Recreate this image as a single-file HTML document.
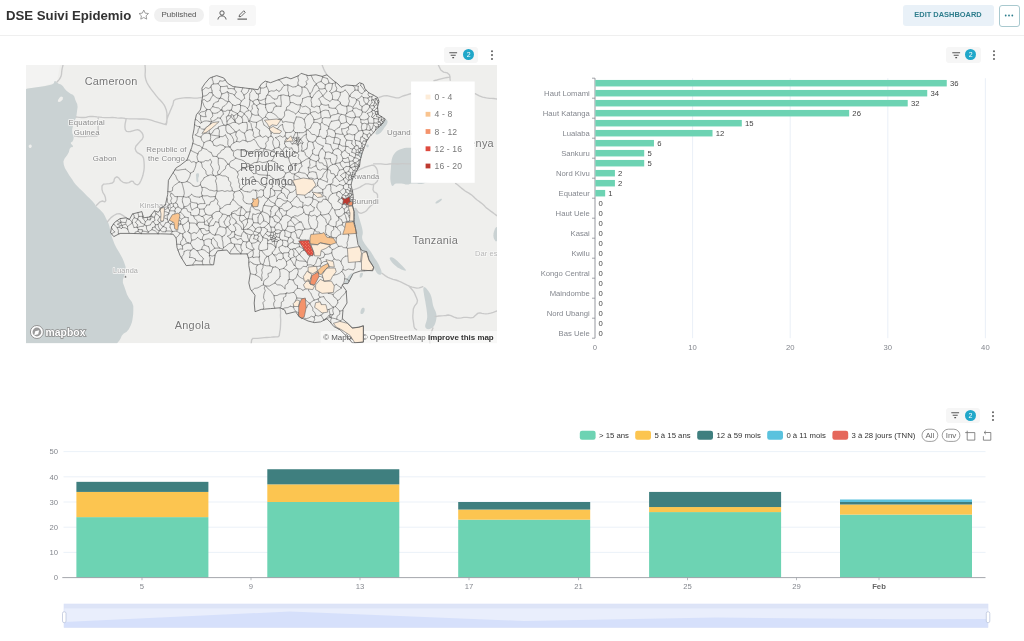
<!DOCTYPE html>
<html><head><meta charset="utf-8"><title>DSE Suivi Epidemio</title>
<style>
html,body{margin:0;padding:0;background:#fff;}
body{will-change:transform;opacity:0.999;width:1024px;height:641px;overflow:hidden;position:relative;font-family:"Liberation Sans",sans-serif;color:#333;}
.abs{position:absolute;}
#hdr{position:absolute;left:0;top:0;width:1024px;height:35px;border-bottom:1px solid #efefef;background:#fff;}
#title{position:absolute;left:6px;top:7.7px;font-size:13.2px;font-weight:bold;color:#323232;white-space:nowrap;line-height:16px;}
#pub{position:absolute;left:154px;top:7.5px;width:50px;height:14.5px;border-radius:8px;background:#f0f0f0;font-size:8px;line-height:14.5px;text-align:center;color:#555;}
#grp{position:absolute;left:209px;top:5px;width:46.5px;height:20.5px;border-radius:3px;background:#f7f7f7;}
#edit{position:absolute;left:902.5px;top:5px;width:91px;height:20.5px;border-radius:3px;background:#e9f1f8;color:#2d7d8c;font-size:7.45px;font-weight:bold;line-height:20.5px;text-align:center;letter-spacing:0;}
#more{position:absolute;left:998.5px;top:5px;width:19.5px;height:19.5px;border-radius:3px;border:1px solid #a9c9cf;background:#fff;}
.chip{position:absolute;width:34.4px;height:15.5px;border-radius:3px;background:#f6f6f6;}
.badge{position:absolute;width:11px;height:11px;border-radius:50%;background:#20a7c9;color:#fff;font-size:7px;line-height:11px;text-align:center;}
svg text{font-family:"Liberation Sans",sans-serif;}
</style></head><body>

<div id="hdr">
<div id="title">DSE Suivi Epidemio</div>
<svg class="abs" style="left:137.6px;top:8.7px" width="11.5" height="11" viewBox="0 0 24 23"><path d="M12 2.2l3 6.4 6.9.9-5 4.8 1.3 6.9L12 17.8l-6.2 3.4 1.3-6.9-5-4.8 6.900-.9z" fill="none" stroke="#8f8f8f" stroke-width="1.800" stroke-linejoin="round"/></svg>
<div id="pub">Published</div>
<div id="grp"></div>
<svg class="abs" style="left:217px;top:9.800px" width="10" height="10" viewBox="0 0 20 20"><circle cx="10" cy="6" r="4.3" fill="none" stroke="#444" stroke-width="1.7"/><path d="M1.8 19c.6-4.600 4-7.200 8.200-7.200s7.600 2.600 8.200 7.200" fill="none" stroke="#444" stroke-width="1.7"/></svg>
<svg class="abs" style="left:236.900px;top:9.700px" width="10.500" height="10" viewBox="0 0 21 20"><path d="M4 13.500l1-3.500 8.500-8.500 3 3L8 13z" fill="none" stroke="#444" stroke-width="1.600" stroke-linejoin="round"/><path d="M1 18.200H20" stroke="#444" stroke-width="2"/></svg>
<div id="edit">EDIT DASHBOARD</div>
<div id="more"><svg class="abs" style="left:4.5px;top:7.6px" width="10" height="3" viewBox="0 0 10 3"><circle cx="1.700" cy="1.500" r="0.900" fill="#2d7d8c"/><circle cx="5" cy="1.500" r="0.900" fill="#2d7d8c"/><circle cx="8.300" cy="1.500" r="0.900" fill="#2d7d8c"/></svg></div>
</div>

<div class="chip" style="left:444.1px;top:47.2px"></div><svg class="abs" style="left:449.3px;top:51.5px" width="9" height="8" viewBox="0 0 9 8"><path d="M0.3 0.8H8.1M1.7 3.2H6.7M3.3 5.6H5.1" stroke="#555" stroke-width="1.05" fill="none"/></svg><div class="badge" style="left:463.1px;top:49.400000000000006px">2</div><svg class="abs" style="left:489.6px;top:49.900000000000006px" width="4" height="11" viewBox="0 0 4 11"><circle cx="2" cy="1.2" r="1.05" fill="#666"/><circle cx="2" cy="5.1" r="1.05" fill="#666"/><circle cx="2" cy="9" r="1.05" fill="#666"/></svg>
<div class="chip" style="left:946.3px;top:47.2px"></div><svg class="abs" style="left:951.5px;top:51.5px" width="9" height="8" viewBox="0 0 9 8"><path d="M0.3 0.8H8.1M1.7 3.2H6.7M3.3 5.6H5.1" stroke="#555" stroke-width="1.05" fill="none"/></svg><div class="badge" style="left:965.3px;top:49.400000000000006px">2</div><svg class="abs" style="left:991.8px;top:49.900000000000006px" width="4" height="11" viewBox="0 0 4 11"><circle cx="2" cy="1.2" r="1.05" fill="#666"/><circle cx="2" cy="5.1" r="1.05" fill="#666"/><circle cx="2" cy="9" r="1.05" fill="#666"/></svg>
<div class="chip" style="left:945.9px;top:407.8px"></div><svg class="abs" style="left:951.1px;top:412.1px" width="9" height="8" viewBox="0 0 9 8"><path d="M0.3 0.8H8.1M1.7 3.2H6.7M3.3 5.6H5.1" stroke="#555" stroke-width="1.05" fill="none"/></svg><div class="badge" style="left:964.9px;top:410.0px">2</div><svg class="abs" style="left:991.4px;top:410.5px" width="4" height="11" viewBox="0 0 4 11"><circle cx="2" cy="1.2" r="1.05" fill="#666"/><circle cx="2" cy="5.1" r="1.05" fill="#666"/><circle cx="2" cy="9" r="1.05" fill="#666"/></svg>
<svg class="abs" style="left:0;top:0" width="1024" height="641" viewBox="0 0 1024 641">
<defs><clipPath id="mc"><rect x="26" y="65" width="471" height="278.3"/></clipPath><pattern id="dots" width="3" height="3" patternUnits="userSpaceOnUse"><circle cx="0.8" cy="0.8" r="0.45" fill="#f6c9a0"/><circle cx="2.3" cy="2.3" r="0.45" fill="#f6c9a0"/></pattern></defs>
<g clip-path="url(#mc)">
<rect x="26" y="65" width="471" height="278.3" fill="#efefed"/>
<path d="M26 65H60L57 82 40 87 26 89Z" fill="#f3f3f2"/>
<path d="M26.0 88.9 27.8 88.6 31.3 88.0 34.9 87.5 38.5 87.1 42.0 86.6 45.3 85.9 48.6 85.2 51.9 84.5 53.9 83.2 54.4 81.3 55.4 81.1 56.8 82.6 58.7 83.8 61.0 84.6 63.0 86.2 64.5 88.5 66.5 90.7 68.8 92.6 71.0 94.0 72.9 94.8 74.3 96.6 75.1 99.2 76.1 101.8 77.2 104.1 77.6 106.9 77.2 110.0 76.8 112.9 76.4 115.7 75.7 118.4 74.5 121.1 73.3 124.8 72.2 129.6 72.2 133.1 73.3 135.4 73.7 137.8 73.3 140.1 72.3 141.7 70.8 142.4 71.0 143.8 72.9 145.7 72.9 146.9 71.0 147.3 69.6 149.1 68.8 152.2 67.1 155.3 64.6 158.4 63.4 161.6 63.8 164.7 65.0 168.2 67.3 172.1 69.2 175.2 70.8 177.5 72.4 179.8 73.9 182.2 75.7 184.4 77.6 186.4 79.5 188.4 81.5 190.3 83.5 192.2 85.4 194.2 87.3 196.2 89.3 198.1 91.2 199.9 92.9 201.8 94.5 203.7 95.9 205.8 97.7 207.8 99.8 209.6 101.7 211.5 103.5 213.6 104.9 215.9 105.9 218.3 107.0 220.6 108.3 222.9 109.4 226.2 110.2 230.5 111.0 234.0 111.8 236.8 113.0 240.1 114.5 244.0 116.5 247.9 118.8 251.8 120.8 255.2 122.3 258.0 123.9 261.7 125.5 266.4 125.8 270.3 124.9 273.5 124.0 276.6 122.9 279.7 122.9 282.8 124.1 285.9 125.5 289.9 127.0 294.5 129.2 298.6 131.9 302.1 133.3 306.0 133.3 310.4 133.2 313.9 132.9 316.6 132.5 319.3 132.0 322.0 130.7 325.4 128.8 329.3 126.4 332.0 123.7 333.6 121.7 335.8 120.6 338.5 119.2 340.7 117.7 342.6 116.9 343.5 26.0 343.5Z" fill="#cad2d3"/>
<path d="M58.0 100.0 59.5 97.7 61.0 96.6 62.5 96.9 63.0 97.8 62.7 99.2 61.8 100.6 60.2 101.8 59.0 102.1 57.8 101.5Z" fill="#efefed"/>
<path d="M29.5 144.8 30.5 144.4 31.2 144.8 31.8 145.9 31.6 146.9 30.7 147.9 29.9 148.0 29.0 147.5 28.7 146.6 28.9 145.6Z" fill="#efefed"/>
<path d="M386.2 119.5 387.2 120.3 387.6 121.4 387.5 122.7 386.9 124.2 385.7 125.9 384.5 127.6 383.4 129.2 382.1 130.9 380.9 132.4 379.6 133.6 378.4 134.3 377.2 134.6 376.1 134.4 375.5 133.9 375.4 132.9 376.0 131.5 377.1 129.7 378.3 127.8 379.6 125.8 381.1 123.7 382.6 121.5 383.9 120.1 385.1 119.4Z" fill="#cad2d3"/>
<path d="M360.3 151.4 361.0 151.6 361.5 152.1 361.9 152.7 362.1 153.5 362.2 154.5 362.1 155.4 361.9 156.2 361.6 156.9 361.2 157.6 360.7 157.9 360.3 157.9 359.9 157.6 359.4 156.9 359.2 156.2 359.0 155.2 359.0 154.1 359.1 152.9 359.4 152.0 359.8 151.5Z" fill="#cad2d3"/>
<path d="M351.9 173.4 352.4 173.6 352.8 174.1 353.1 174.9 353.3 175.9 353.4 177.1 353.3 178.2 353.2 179.2 352.9 180.1 352.4 180.9 352.0 181.2 351.7 181.1 351.4 180.5 351.1 179.5 350.9 178.4 350.8 177.3 350.8 176.1 351.0 174.9 351.2 174.0 351.5 173.5Z" fill="#cad2d3"/>
<path d="M354.5 208.0 355.3 208.0 356.1 208.7 356.9 210.1 357.7 212.3 358.4 215.1 359.2 218.0 360.1 221.0 361.0 224.1 361.9 227.2 362.5 229.9 362.8 232.3 362.7 234.2 362.2 235.8 362.1 237.3 362.3 238.9 362.8 240.5 363.7 242.0 364.7 243.7 366.0 245.5 367.3 247.3 368.9 249.3 370.3 251.1 371.5 252.8 372.5 254.4 373.3 255.8 374.1 257.2 374.9 258.4 375.6 259.5 376.4 260.5 377.2 261.8 378.0 263.3 379.0 265.1 379.9 267.2 380.7 269.0 381.3 270.6 381.6 271.9 381.8 272.9 381.7 273.7 381.3 274.3 380.6 274.7 379.7 274.8 378.7 274.5 377.6 273.7 376.5 272.4 375.4 270.6 374.2 268.8 373.0 266.8 371.9 264.8 370.7 262.6 369.7 260.5 368.8 258.5 368.1 256.6 367.5 254.8 366.8 253.3 365.9 252.2 364.8 251.5 363.7 251.1 362.6 250.5 361.5 249.5 360.5 248.3 359.7 246.7 358.9 245.0 358.2 243.0 357.6 240.9 357.1 238.5 356.7 236.4 356.4 234.4 356.1 232.7 355.9 231.1 355.7 229.4 355.4 227.7 355.0 225.8 354.6 223.9 354.3 221.9 354.1 219.7 354.0 217.5 354.0 215.1 353.9 213.1 353.9 211.5 353.7 210.2 353.5 209.4 353.6 208.7 353.9 208.2Z" fill="#cad2d3"/>
<path d="M352.0 273.2 352.8 273.4 352.9 274.1 352.5 275.5 351.6 277.4 350.2 280.0 348.8 281.9 347.6 283.2 346.4 283.8 345.4 283.8 344.8 283.4 344.7 282.7 345.0 281.6 345.8 280.2 346.6 278.8 347.6 277.4 348.5 276.1 349.5 274.9 350.4 274.0 351.3 273.4Z" fill="#cad2d3"/>
<path d="M361.5 272.8 362.4 272.8 362.9 273.2 363.0 273.8 362.8 274.8 362.3 276.1 361.8 277.0 361.2 277.6 360.7 277.8 360.1 277.7 359.8 277.3 359.6 276.6 359.7 275.7 359.9 274.5 360.3 273.6 360.9 273.0Z" fill="#cad2d3"/>
<path d="M362.6 307.8 363.4 307.7 364.0 307.8 364.4 308.2 364.6 308.8 364.7 309.7 364.6 310.6 364.4 311.4 363.9 312.3 363.4 313.2 362.8 313.8 362.2 314.1 361.6 314.1 360.9 313.9 360.6 313.3 360.4 312.5 360.6 311.4 360.9 310.1 361.4 309.0 362.0 308.2Z" fill="#cad2d3"/>
<path d="M390.1 257.5 391.3 257.3 392.6 257.6 394.0 258.3 395.6 259.4 397.4 261.1 399.1 262.8 400.9 264.5 402.7 266.3 404.5 268.2 405.6 269.6 405.9 270.4 405.4 270.7 404.3 270.6 402.9 270.1 401.3 269.5 399.6 268.5 397.6 267.4 395.8 266.0 394.0 264.4 392.3 262.7 390.8 260.7 389.9 259.2 389.7 258.1Z" fill="#cad2d3"/>
<path d="M424.0 287.0 424.8 287.2 425.7 287.8 426.8 288.9 428.0 290.4 429.4 292.4 430.5 294.5 431.4 296.9 432.0 299.4 432.4 302.1 432.9 304.7 433.6 307.0 434.5 309.2 435.4 311.1 436.1 313.0 436.5 315.0 436.6 317.0 436.3 318.9 436.0 320.8 435.5 322.5 434.9 324.2 434.1 325.7 433.2 327.0 432.2 327.9 430.9 328.6 429.6 329.1 428.3 329.2 427.3 329.0 426.3 328.5 425.6 327.8 425.2 326.7 425.2 325.3 425.6 323.7 426.3 321.7 426.9 319.6 427.2 317.5 427.2 315.2 427.0 312.9 426.7 310.4 426.3 307.6 425.8 304.7 425.3 301.6 424.7 298.6 424.2 295.8 423.8 293.1 423.4 290.5 423.3 288.7 423.5 287.5Z" fill="#cad2d3"/>
<path d="M393.3 155.2 394.5 153.4 396.0 151.8 397.7 150.5 399.8 149.4 402.1 148.7 404.4 148.1 406.8 147.8 409.1 147.7 411.5 147.8 414.2 147.8 417.2 147.6 420.6 147.2 424.4 146.8 428.8 146.6 433.8 146.9 439.4 147.5 445.6 148.5 450.9 149.9 455.3 151.6 458.8 153.8 461.2 156.2 462.9 159.1 463.8 162.2 463.9 165.6 463.1 169.4 461.8 172.6 459.9 175.2 457.5 177.2 454.5 178.8 451.0 179.9 447.0 180.7 442.5 181.2 437.5 181.3 433.1 181.6 429.4 182.0 426.2 182.6 423.8 183.4 421.7 183.9 420.0 184.1 418.7 184.1 417.9 183.8 416.9 183.6 415.8 183.5 414.5 183.4 413.1 183.4 411.8 183.5 410.6 183.7 409.6 184.0 408.6 184.4 407.6 184.6 406.6 184.6 405.4 184.4 404.3 184.0 402.9 183.7 401.3 183.5 399.6 183.4 397.6 183.4 396.0 183.6 394.7 184.1 393.8 184.9 393.2 185.8 392.6 186.1 392.0 185.7 391.4 184.7 390.9 182.9 390.5 180.9 390.3 178.7 390.3 176.2 390.5 173.5 390.7 170.7 390.9 167.9 391.1 165.1 391.3 162.3 391.7 159.7 392.4 157.3Z" fill="#cad2d3"/>
<path d="M196.9 173.3 197.7 173.2 198.3 173.3 198.7 173.6 198.9 174.1 199.1 174.9 199.0 175.6 198.9 176.2 198.8 176.8 198.5 177.2 198.3 177.9 198.2 178.6 198.2 179.5 198.4 180.5 198.4 181.3 198.2 181.8 197.8 182.2 197.3 182.3 196.9 182.1 196.7 181.6 196.4 180.8 196.3 179.7 196.2 178.6 196.1 177.4 196.1 176.3 195.9 175.2 196.1 174.3 196.4 173.7Z" fill="#cad2d3"/>
<path d="M436.9 201.1 438.6 200.0 439.9 199.2 440.9 198.8 441.6 198.8 441.9 199.0 441.9 199.6 441.4 200.3 440.4 201.2 439.1 202.3 437.9 203.1 436.9 203.5 436.1 203.5 435.4 203.2 435.4 202.7 435.9 202.0Z" fill="#cad2d3"/>
<path d="M496.2 227.0 495.3 228.3 494.6 229.8 494.0 231.4 493.6 233.2 493.4 235.2 493.5 237.0 493.9 238.6 494.7 240.1 495.8 241.5 496.7 241.3 497.2 239.7 497.5 236.6 497.5 231.9 497.3 228.8 496.8 227.1Z" fill="#cad2d3"/>
<path d="M366.9 144.6 367.6 144.4 368.1 144.5 368.4 144.8 368.6 145.2 368.7 145.9 368.6 146.5 368.4 146.9 367.9 147.2 367.4 147.4 366.9 147.3 366.6 147.0 366.3 146.5 366.2 145.8 366.2 145.3 366.5 144.9Z" fill="#cad2d3"/>
<path d="M63.0 65.0 62.7 66.3 62.1 68.9 61.7 71.6 61.5 74.3 61.0 76.4 60.2 78.0 59.1 79.6 57.7 81.2 57.0 82.0 M145.0 65.0 145.1 66.3 145.3 69.0 145.3 71.6 145.1 74.3 145.2 76.6 145.6 78.6 146.1 80.6 146.9 82.5 147.9 84.4 149.2 86.5 150.5 88.4 152.0 90.3 154.0 92.8 156.3 95.9 158.4 98.4 160.3 100.3 162.0 102.2 163.7 104.3 165.1 106.9 166.3 110.0 166.9 113.0 166.9 115.7 166.9 118.4 166.9 121.1 166.7 123.1 166.3 124.2 166.1 124.8 M76.2 117.0 77.3 117.1 79.5 117.4 81.7 117.5 83.9 117.5 86.1 117.3 88.3 116.7 90.5 116.5 92.6 116.5 94.8 116.6 97.0 116.9 99.4 117.1 102.0 117.4 104.6 117.6 107.2 117.6 109.8 117.6 112.4 117.5 114.8 117.6 116.9 117.9 118.9 118.1 121.1 118.0 123.1 118.2 125.2 118.5 127.4 118.7 129.8 118.8 132.1 118.9 134.5 118.9 136.8 118.9 139.1 119.0 141.5 119.0 143.8 119.0 146.4 119.2 149.2 119.7 151.9 120.4 154.6 121.3 157.3 122.1 159.8 122.8 162.3 123.6 164.8 124.4 166.3 123.4 166.7 120.8 167.3 118.4 168.0 116.4 168.7 114.5 169.6 112.6 170.4 110.6 171.2 108.7 172.0 106.8 172.8 104.9 173.3 102.9 173.7 100.8 175.4 99.4 178.5 98.7 181.9 98.1 185.9 97.7 189.8 97.7 193.6 98.1 197.2 98.1 200.3 97.7 201.9 97.5 M98.1 117.0 98.2 118.2 98.3 120.6 98.3 123.0 98.1 125.4 98.1 127.7 98.2 130.1 98.2 132.5 98.1 134.9 96.9 136.1 94.6 136.0 92.2 136.0 89.9 136.0 87.6 136.1 85.2 136.5 82.9 136.6 80.5 136.7 78.2 136.5 75.9 136.2 74.7 136.1 M126.2 118.6 125.9 120.3 125.1 123.8 124.9 127.0 125.3 129.7 126.5 131.3 128.4 131.7 130.5 131.5 132.8 130.8 135.2 130.2 137.6 129.7 139.7 130.5 141.7 132.4 142.9 134.6 143.2 136.9 142.2 139.3 139.9 141.6 137.8 144.0 135.8 146.3 135.2 148.7 136.0 151.0 137.3 152.7 139.2 153.7 141.0 154.8 142.6 156.2 143.6 158.4 144.0 161.5 144.2 164.6 144.2 167.8 143.9 170.6 143.4 172.9 142.9 175.3 142.2 177.6 141.1 180.3 139.5 183.4 137.8 184.8 135.8 184.4 134.2 183.2 133.1 181.3 131.3 181.1 129.0 182.6 126.2 183.0 123.1 182.3 120.6 180.5 118.7 177.8 116.9 176.8 115.3 177.6 114.3 179.2 113.9 181.5 112.3 183.0 109.4 183.6 106.4 183.9 103.5 184.1 102.0 186.0 102.0 189.5 102.8 192.4 104.4 194.8 105.4 197.6 105.8 200.6 104.8 201.8 102.4 201.0 100.1 201.8 97.8 204.1 96.6 205.3 M107.5 221.7 108.7 220.3 111.0 217.6 113.8 215.5 116.9 213.9 119.6 213.7 121.9 214.9 123.9 216.1 125.5 217.2 126.2 217.8 M322.2 65.0 322.6 66.2 323.6 68.8 324.7 71.2 326.2 73.6 326.9 74.8 M379.0 97.5 380.6 96.9 383.7 95.8 386.9 95.6 390.0 96.3 393.2 97.1 396.2 97.9 398.8 97.9 400.7 97.0 402.6 96.2 404.6 95.5 407.0 94.8 409.6 94.0 411.0 93.6 M475.2 93.6 476.5 94.4 479.3 95.9 482.6 97.1 486.4 97.9 489.5 98.3 491.6 98.3 493.8 98.5 495.9 98.8 497.0 99.0 M438.4 65.0 439.2 66.7 440.8 70.0 443.6 72.1 447.4 72.9 449.6 75.0 450.0 78.5 450.2 80.3 M433.8 80.8 434.8 80.5 436.9 80.0 438.9 79.4 441.0 78.8 443.0 78.3 445.1 77.9 447.1 77.5 449.2 77.2 450.2 77.0 M373.6 163.9 374.6 163.9 376.7 163.9 378.8 163.9 380.9 163.9 383.0 164.1 385.0 164.3 387.1 164.3 389.2 164.0 391.3 163.9 393.3 163.9 395.4 163.9 397.5 164.0 399.6 163.9 401.6 163.6 403.7 163.6 405.8 163.8 407.9 163.9 410.0 163.9 411.0 163.9 M455.6 183.4 456.5 184.0 458.2 185.3 459.8 186.7 461.4 188.1 463.1 189.4 464.8 190.7 466.6 191.9 468.5 192.9 470.3 194.1 472.0 195.3 473.6 196.7 475.1 198.2 476.8 199.7 478.6 201.0 480.4 202.4 482.2 203.7 483.9 205.2 485.4 206.9 487.1 208.4 488.9 209.7 490.7 211.1 492.5 212.4 494.3 213.8 496.1 215.1 497.0 215.8 M354.8 171.7 356.2 171.1 358.9 170.0 361.2 168.9 363.1 168.0 365.0 167.2 367.0 166.6 369.4 165.9 372.2 165.1 374.6 165.9 376.5 168.2 377.5 170.8 377.6 173.5 377.8 176.2 378.1 178.9 377.1 181.5 374.8 183.8 371.9 184.6 368.4 183.8 365.6 183.9 363.6 185.0 361.6 186.1 359.7 187.4 357.4 188.4 354.7 189.3 353.3 189.7 M373.6 185.0 373.4 186.6 373.0 189.7 374.0 191.8 376.3 193.0 377.5 194.7 377.6 196.9 377.4 199.0 376.9 201.1 375.3 203.0 372.6 204.5 370.5 206.0 369.1 207.5 367.7 209.1 366.4 210.8 364.2 212.2 361.1 213.3 358.5 212.5 356.6 209.8 355.6 208.4 M382.2 273.4 383.3 274.2 385.5 275.9 387.9 277.3 390.4 278.4 393.0 279.3 395.8 280.0 398.6 281.0 401.2 282.2 404.1 283.6 407.2 285.2 409.9 286.4 412.2 287.1 414.5 287.6 416.8 288.1 419.2 287.9 421.6 287.1 422.8 286.7 M408.8 286.0 409.5 286.7 410.9 288.2 412.2 289.8 413.5 291.4 414.7 293.4 415.6 295.7 416.6 298.1 417.5 300.4 416.9 303.2 414.5 306.2 413.3 309.0 413.2 311.3 413.0 313.7 412.8 316.0 412.9 318.5 413.3 321.2 413.7 323.9 414.0 326.6 414.8 328.4 416.0 329.3 416.6 329.7 M435.3 316.4 436.5 316.3 438.8 316.0 441.2 315.8 443.6 315.7 445.9 315.5 448.2 315.0 450.9 315.6 454.1 317.2 456.8 318.0 459.2 318.1 461.5 317.9 463.8 317.4 466.9 317.4 470.9 317.8 473.5 317.3 475.0 315.8 476.5 314.4 478.2 313.1 480.0 312.8 481.9 313.3 483.9 313.7 485.9 313.9 488.2 313.7 490.7 313.1 493.3 312.3 495.8 311.4 497.0 311.0 M280.0 307.8 280.2 308.8 280.5 310.9 280.6 313.0 280.4 315.1 280.5 317.2 280.7 319.3 280.7 321.3 280.6 323.4 280.5 325.4 280.4 327.5 280.2 329.6 279.8 331.6 279.5 333.6 279.3 335.7 278.1 336.8 275.8 336.9 273.5 337.0 271.2 337.2 269.0 337.3 266.7 337.5 264.4 337.7 262.2 337.9 259.9 338.1 257.6 338.3 255.3 338.3 253.0 338.3 251.7 339.7 251.3 342.6 251.1 344.0 M433.0 328.0 432.5 329.2 431.5 331.8 430.6 334.8 429.9 338.2 429.6 341.0 429.9 343.0 430.0 344.0" fill="none" stroke="#c9c9c9" stroke-width="1.35" stroke-linejoin="round" stroke-linecap="round"/>
<text x="111.1" y="85.2" font-size="10.9" text-anchor="middle" fill="#767676" font-weight="normal" letter-spacing="0.25" stroke="#f7f7f6" stroke-width="1.6" stroke-linejoin="round" paint-order="stroke">Cameroon</text>
<text x="86.7" y="125.2" font-size="7.8" text-anchor="middle" fill="#8a8a8a" font-weight="normal" letter-spacing="0.12" stroke="#f7f7f6" stroke-width="1.6" stroke-linejoin="round" paint-order="stroke">Equatorial</text>
<text x="86.7" y="134.9" font-size="7.8" text-anchor="middle" fill="#8a8a8a" font-weight="normal" letter-spacing="0.12" stroke="#f7f7f6" stroke-width="1.6" stroke-linejoin="round" paint-order="stroke">Guinea</text>
<text x="104.8" y="161" font-size="7.8" text-anchor="middle" fill="#8a8a8a" font-weight="normal" letter-spacing="0.12" stroke="#f7f7f6" stroke-width="1.6" stroke-linejoin="round" paint-order="stroke">Gabon</text>
<text x="166.5" y="152.3" font-size="7.8" text-anchor="middle" fill="#8a8a8a" font-weight="normal" letter-spacing="0.12" stroke="#f7f7f6" stroke-width="1.6" stroke-linejoin="round" paint-order="stroke">Republic of</text>
<text x="166.5" y="161.4" font-size="7.8" text-anchor="middle" fill="#8a8a8a" font-weight="normal" letter-spacing="0.12" stroke="#f7f7f6" stroke-width="1.6" stroke-linejoin="round" paint-order="stroke">the Congo</text>
<text x="268.3" y="156.6" font-size="10.9" text-anchor="middle" fill="#6c6c6c" font-weight="normal" letter-spacing="0.2" stroke="#f7f7f6" stroke-width="1.2" stroke-linejoin="round" paint-order="stroke">Democratic</text>
<text x="268.7" y="170.6" font-size="10.9" text-anchor="middle" fill="#6c6c6c" font-weight="normal" letter-spacing="0.2" stroke="#f7f7f6" stroke-width="1.2" stroke-linejoin="round" paint-order="stroke">Republic of</text>
<text x="267.2" y="184.6" font-size="10.9" text-anchor="middle" fill="#6c6c6c" font-weight="normal" letter-spacing="0.2" stroke="#f7f7f6" stroke-width="1.2" stroke-linejoin="round" paint-order="stroke">the Congo</text>
<text x="155.5" y="208.2" font-size="7.5" text-anchor="middle" fill="#aaaaaa" font-weight="normal" letter-spacing="0.1" stroke="#f7f7f6" stroke-width="1.6" stroke-linejoin="round" paint-order="stroke">Kinshasa</text>
<text x="386.9" y="134.6" font-size="7.9" text-anchor="start" fill="#8a8a8a" font-weight="normal" letter-spacing="0.12" stroke="#f7f7f6" stroke-width="1.6" stroke-linejoin="round" paint-order="stroke">Uganda</text>
<text x="493.9" y="147" font-size="10.9" text-anchor="end" fill="#767676" font-weight="normal" letter-spacing="0.25" stroke="#f7f7f6" stroke-width="1.6" stroke-linejoin="round" paint-order="stroke">Kenya</text>
<text x="365.2" y="179.4" font-size="7.6" text-anchor="middle" fill="#8a8a8a" font-weight="normal" letter-spacing="0.1" stroke="#f7f7f6" stroke-width="1.6" stroke-linejoin="round" paint-order="stroke">Rwanda</text>
<text x="365.2" y="204" font-size="7.7" text-anchor="middle" fill="#8a8a8a" font-weight="normal" letter-spacing="0.1" stroke="#f7f7f6" stroke-width="1.6" stroke-linejoin="round" paint-order="stroke">Burundi</text>
<text x="435.3" y="244.2" font-size="10.9" text-anchor="middle" fill="#767676" font-weight="normal" letter-spacing="0.25" stroke="#f7f7f6" stroke-width="1.6" stroke-linejoin="round" paint-order="stroke">Tanzania</text>
<text x="475" y="256.3" font-size="7.5" text-anchor="start" fill="#b8b8b8" font-weight="normal" letter-spacing="0.1" stroke="#f7f7f6" stroke-width="1.6" stroke-linejoin="round" paint-order="stroke">Dar es</text>
<text x="125.5" y="273.2" font-size="7.3" text-anchor="middle" fill="#aaaaaa" font-weight="normal" letter-spacing="0.1" stroke="#f7f7f6" stroke-width="1.6" stroke-linejoin="round" paint-order="stroke">Luanda</text>
<circle cx="125.5" cy="276.9" r="1.1" fill="#666" stroke="#fff" stroke-width="0.5"/>
<text x="192.5" y="329" font-size="10.9" text-anchor="middle" fill="#767676" font-weight="normal" letter-spacing="0.25" stroke="#f7f7f6" stroke-width="1.6" stroke-linejoin="round" paint-order="stroke">Angola</text>
<rect x="320.6" y="331" width="177" height="13" fill="#fff" fill-opacity="0.55"/>
<text x="323.2" y="340" font-size="7.95" fill="#555">© Mapbox © OpenStreetMap <tspan font-weight="bold" fill="#333">Improve this map</tspan></text>
<path d="M212.4 77.1 212.1 78.9 213.1 81.4 213.3 83.9 M211.4 85.2 213.3 83.9 M225.2 80.0 225.2 80.1 222.8 81.2 219.9 80.9 M227.1 86.0 223.9 86.5 220.6 86.6 M220.6 86.6 218.1 83.7 M219.9 80.9 218.1 83.7 M213.3 83.9 215.7 83.9 218.1 83.7 M361.2 83.3 360.6 85.4 M360.6 85.4 362.8 88.1 364.8 91.0 M366.4 90.3 364.8 91.0 M228.2 88.7 231.2 88.5 234.2 88.9 M227.1 86.0 228.2 88.7 M234.2 88.9 235.0 86.8 M215.3 196.5 212.7 196.7 210.1 196.9 207.5 195.7 204.9 195.9 202.3 195.8 M217.2 191.2 216.2 193.8 215.3 196.5 M216.9 190.5 214.2 191.1 211.8 190.4 209.3 190.0 207.0 188.4 204.6 187.4 202.0 187.4 M202.0 187.4 202.3 190.2 201.3 193.0 202.3 195.8 M216.5 199.0 218.1 201.2 217.3 204.2 219.7 206.1 220.1 208.7 M220.1 208.7 222.6 207.7 224.6 205.5 227.1 204.5 230.1 204.4 M230.1 204.4 230.5 202.9 M215.5 198.0 215.3 196.5 M217.2 191.2 219.7 191.0 222.2 190.5 224.8 191.5 227.3 190.7 229.8 191.3 232.3 190.7 M232.3 190.7 234.5 192.0 M234.5 192.0 233.4 194.5 233.9 197.2 232.9 199.7 M215.5 198.0 216.5 199.0 M232.9 199.7 230.5 202.9 M211.4 85.2 210.9 87.0 M210.9 87.0 208.7 88.5 205.7 87.5 203.6 89.4 202.1 90.2 M141.2 233.4 141.3 233.7 M141.2 233.4 138.0 231.3 M134.8 233.5 135.1 232.2 138.0 231.3 M190.5 173.2 188.0 171.1 185.4 169.2 M186.9 181.5 188.6 178.9 189.9 176.2 190.5 173.2 M186.9 181.5 184.4 182.4 181.8 182.6 M185.4 169.2 182.9 169.5 180.5 169.8 178.1 170.3 175.6 169.9 174.8 170.0 M173.4 172.2 173.8 173.7 175.6 175.5 176.5 177.9 177.5 180.2 179.4 181.9 M179.4 181.9 181.8 182.6 M376.0 98.8 377.4 97.5 M376.0 98.8 375.5 98.5 M368.5 92.4 368.0 94.9 369.7 96.8 M369.7 96.8 371.8 96.7 M373.6 95.2 371.8 96.7 M186.8 160.3 186.7 160.2 M241.8 206.8 239.2 205.5 237.0 203.7 235.3 201.3 232.9 199.7 M234.5 192.0 236.9 191.2 239.5 190.5 M246.4 203.4 244.1 201.8 243.0 199.7 243.4 196.7 242.7 194.4 241.4 192.3 239.5 190.5 M228.3 177.7 228.6 180.4 231.0 182.6 230.4 185.6 232.0 188.0 232.3 190.7 M237.4 172.0 238.4 174.4 237.3 177.2 238.7 179.5 238.6 182.1 239.8 184.5 239.3 187.2 241.0 189.4 M239.5 190.5 241.0 189.4 M376.1 98.9 374.8 101.4 M375.5 98.5 373.2 99.9 M374.8 101.4 373.2 99.9 M371.8 96.7 372.0 99.8 M373.2 99.9 372.0 99.8 M141.2 233.4 142.5 231.1 M142.5 231.1 145.4 231.4 148.2 232.3 M237.4 171.9 235.6 169.7 233.1 168.2 230.3 167.1 229.0 164.3 M237.4 171.9 239.7 170.3 241.9 168.7 245.0 168.8 247.1 167.0 249.5 165.8 M249.0 163.8 249.6 165.2 M249.0 163.8 246.1 163.1 244.0 161.0 241.3 159.8 238.5 159.1 235.9 158.1 M235.9 158.1 233.5 160.0 230.6 161.4 229.0 164.3 M220.6 86.6 220.1 90.5 M210.9 87.0 212.1 90.9 M227.4 91.7 224.8 93.1 221.8 93.9 M220.1 90.5 221.8 93.9 M221.8 109.3 222.6 106.8 225.0 105.6 226.7 103.7 228.0 101.6 M228.0 101.6 225.3 100.7 223.0 98.9 220.4 98.0 M218.0 101.6 219.5 98.4 M219.5 98.4 220.4 98.0 M227.4 91.7 227.8 92.2 M221.8 93.9 220.4 98.0 M227.8 92.2 228.8 95.2 228.3 98.4 228.8 101.5 M137.6 224.9 135.5 222.3 M135.5 222.3 137.8 219.6 M137.8 219.6 140.0 221.1 M140.8 222.7 140.0 221.1 M134.1 227.6 137.0 227.2 M137.0 227.2 137.6 224.9 M132.3 223.0 133.2 225.3 134.1 227.6 M145.4 221.8 142.7 218.0 M144.5 224.6 145.4 221.8 M144.5 224.6 140.8 222.7 M134.3 217.7 137.6 219.0 M134.3 217.7 134.0 214.9 132.5 213.9 M138.9 216.5 137.6 219.0 M138.9 216.5 138.2 214.1 137.9 212.6 M132.4 222.7 132.1 222.3 M132.1 222.3 132.6 219.7 134.3 217.7 M137.8 219.6 137.6 219.0 M127.2 218.5 130.1 219.8 132.1 222.3 M142.8 216.3 142.7 218.0 M142.8 216.3 138.9 216.5 M111.5 233.8 112.7 233.2 114.8 231.9 M118.9 234.0 118.3 233.2 M114.8 231.9 112.7 229.9 111.5 227.5 111.5 227.0 M127.2 218.5 125.8 222.7 M120.8 218.5 120.1 219.3 121.0 222.1 M125.8 222.7 121.0 222.1 M117.2 220.6 118.3 221.9 120.7 222.5 M121.0 222.1 120.7 222.5 M138.4 229.6 137.4 227.5 M138.4 229.6 142.1 229.7 M137.4 227.5 140.3 226.5 143.4 226.2 M138.0 231.3 138.4 229.6 M137.0 227.2 137.4 227.5 M142.5 231.1 142.1 229.7 M144.6 224.9 143.4 226.2 M148.2 232.3 148.3 231.9 M144.6 224.9 146.3 225.9 M146.3 225.9 146.6 229.1 148.3 231.9 M142.8 216.3 143.0 216.1 M145.4 221.8 147.5 219.7 M147.5 219.7 147.4 217.3 M218.4 158.2 218.2 161.0 218.3 163.7 219.4 166.5 219.3 169.3 217.4 172.0 218.2 174.8 M218.4 158.2 221.1 158.3 223.5 159.0 225.6 160.9 M227.8 164.1 225.6 160.9 M227.8 164.1 225.9 166.0 225.3 169.0 223.0 170.5 221.2 172.5 219.5 174.6 M219.5 174.6 218.2 174.8 M229.0 164.3 227.8 164.1 M228.3 177.7 225.6 176.0 222.4 175.8 219.5 174.6 M216.9 190.5 216.9 188.1 216.7 185.7 216.3 183.3 215.4 180.9 216.6 178.4 215.6 176.1 M215.6 176.1 218.2 174.8 M193.1 185.8 195.7 186.5 198.1 186.2 200.4 184.8 M186.9 181.5 189.3 182.5 191.4 183.8 193.1 185.8 M200.4 184.8 200.8 182.0 202.8 180.0 204.1 177.8 M190.5 173.2 193.4 171.6 M186.8 160.3 189.4 159.9 191.3 162.3 194.0 161.5 196.1 162.9 M193.4 171.6 194.7 168.8 195.7 166.0 196.1 162.9 M197.9 153.9 195.5 152.7 193.2 151.7 190.9 150.3 190.7 150.2 M197.9 153.9 197.0 156.5 197.4 159.0 198.4 161.5 M198.4 161.5 196.1 162.9 M220.1 208.7 219.4 211.3 M219.4 211.3 216.0 211.6 213.1 213.5 M215.5 198.0 214.1 200.8 210.7 201.9 209.5 204.8 M206.7 205.1 205.6 207.2 204.0 209.0 M209.5 204.8 206.7 205.1 M213.1 213.5 211.9 215.2 M211.9 215.2 208.9 215.3 206.0 214.3 M204.0 209.0 204.6 211.8 206.0 214.3 M202.3 195.8 202.0 196.2 M202.0 196.2 202.9 198.7 204.3 201.0 204.9 203.6 M247.6 222.4 247.3 219.1 M247.6 222.4 246.0 225.6 243.6 228.3 M243.6 228.3 243.5 224.8 241.6 221.9 M246.7 218.9 244.0 220.1 241.6 221.9 M236.4 221.9 234.9 219.2 232.0 217.4 231.4 214.2 M231.7 213.8 231.4 214.2 M231.7 213.8 234.7 213.3 237.2 215.3 240.1 215.6 M239.9 220.6 239.4 218.1 240.1 215.6 M189.5 257.4 192.5 257.6 195.2 258.9 M192.9 265.0 192.8 264.3 194.2 262.3 195.7 260.4 M195.7 260.4 195.2 258.9 M203.0 264.8 202.6 263.6 202.2 261.1 M211.3 264.8 209.7 263.2 209.6 260.7 210.2 258.1 209.3 255.8 M202.2 261.1 203.4 258.8 M195.7 260.4 198.9 261.1 202.2 261.1 M189.5 257.4 190.1 255.1 189.8 252.5 190.9 250.3 M181.8 258.4 182.0 256.5 183.7 254.3 184.2 251.4 M190.9 250.3 187.4 250.1 184.2 251.4 M188.3 220.9 185.6 223.2 182.6 225.0 M182.6 225.0 183.0 227.4 184.0 229.8 185.2 232.0 M188.3 220.9 189.5 223.0 M187.8 231.6 188.5 230.5 M189.5 223.0 189.5 225.5 189.6 228.1 188.5 230.5 M304.4 87.0 306.9 84.0 M304.4 87.0 307.2 88.5 308.5 91.3 310.0 93.8 M310.0 93.8 312.1 91.3 313.2 88.3 314.7 85.5 M364.8 91.0 362.0 93.8 M358.3 86.3 358.0 90.2 M362.0 93.8 359.5 92.5 358.0 90.2 M376.6 104.1 375.3 102.8 M374.2 106.3 373.5 105.6 M376.8 104.6 374.2 106.3 M375.1 102.8 374.4 103.0 M373.5 105.6 374.4 103.0 M374.8 101.4 375.1 102.8 M371.5 100.6 372.0 99.8 M371.5 100.6 372.1 102.5 M382.7 123.2 381.0 123.8 M383.2 122.5 382.5 121.6 M380.5 122.7 381.0 123.8 M380.5 122.7 378.8 122.0 M382.2 121.5 381.4 120.3 M381.4 120.3 378.8 122.0 M300.0 96.1 296.5 96.0 293.3 94.8 M300.0 96.1 301.8 93.4 302.2 90.4 301.9 87.2 M301.9 87.2 298.1 85.1 M295.8 86.6 298.1 85.1 M289.7 96.5 293.3 94.8 M289.7 96.5 288.5 95.8 M295.8 86.6 292.9 87.1 290.3 85.9 287.8 84.9 M288.5 95.8 288.7 93.0 287.7 90.4 287.9 87.6 287.8 84.9 M272.5 122.4 271.6 124.7 269.7 126.6 269.6 129.3 M271.2 133.3 269.6 129.3 M281.4 119.5 278.1 119.4 275.4 121.0 272.5 122.4 M281.4 119.5 282.8 122.2 M271.2 133.3 273.2 131.2 275.4 129.4 278.1 128.2 279.8 125.7 282.5 124.4 M307.8 140.3 306.3 137.5 306.3 134.3 M306.3 134.3 304.0 135.5 302.2 137.2 300.7 139.2 M300.7 139.2 300.5 139.6 M300.5 139.6 303.1 142.7 M197.9 153.9 198.9 151.5 201.4 150.4 202.2 147.9 M192.7 143.4 195.1 144.1 197.5 145.3 200.2 145.9 202.2 147.9 M194.5 124.5 195.1 124.9 197.2 126.3 199.7 126.6 M199.7 126.6 199.7 127.1 M195.2 134.9 197.7 132.9 198.2 129.7 199.7 127.1 M248.1 218.7 249.1 215.3 250.0 211.9 M248.1 218.7 252.4 219.1 M253.0 214.0 252.3 216.5 252.4 219.1 M252.3 224.6 253.6 222.7 M253.6 222.7 252.6 219.3 M248.1 218.7 247.3 219.1 M377.5 100.9 378.6 100.4 M377.5 101.0 378.1 102.5 M378.1 102.5 378.7 102.6 M376.1 98.9 377.5 100.9 M376.6 104.1 378.1 102.5 M384.6 118.8 382.5 121.6 M253.6 222.7 258.1 222.9 M258.1 222.9 258.0 220.1 258.0 217.3 M253.0 214.0 255.6 214.5 258.0 213.3 260.5 213.2 M258.0 217.3 259.0 215.1 260.5 213.2 M252.2 225.2 254.0 227.0 255.6 229.0 M252.2 225.2 252.3 224.6 M258.1 222.9 260.1 224.3 M260.4 227.1 257.7 227.4 255.6 229.0 M253.6 232.1 251.0 230.0 247.7 229.1 M252.2 225.2 250.1 227.3 247.7 229.1 M253.6 232.1 254.6 231.2 M255.6 229.0 254.6 231.2 M152.0 229.6 148.3 231.9 M152.0 229.6 155.4 231.0 158.0 233.5 M158.0 233.8 158.0 233.5 M361.2 249.5 358.8 249.5 M368.1 256.6 367.8 256.9 366.2 258.7 365.5 261.3 M358.8 249.5 358.4 252.2 357.8 254.9 356.1 257.2 355.4 259.8 M365.5 261.3 363.1 260.0 360.4 261.9 358.0 261.2 355.6 260.3 M256.6 122.4 259.2 120.9 262.1 119.7 M256.6 122.4 256.5 125.1 255.9 127.6 M259.7 130.3 255.9 127.6 M264.0 125.0 263.0 122.4 262.1 119.7 M248.8 121.4 251.0 123.6 251.5 126.7 252.6 129.4 M248.8 121.4 249.7 120.9 M249.7 120.9 253.0 122.0 256.6 122.4 M213.1 94.9 212.0 92.7 M213.1 94.9 211.3 97.6 209.8 100.5 M212.0 92.7 209.2 92.6 207.4 94.9 205.0 96.0 202.7 96.2 M209.8 100.5 207.1 101.8 204.2 99.4 201.9 100.5 M212.1 90.9 212.0 92.7 M219.5 98.4 217.0 98.0 215.1 96.5 213.1 94.9 M213.5 103.9 215.5 102.3 218.0 101.6 M221.7 110.1 221.0 110.2 M221.7 110.1 221.8 109.3 M213.5 103.9 212.7 106.6 M212.7 106.6 215.6 107.5 218.7 108.0 221.0 110.2 M230.1 134.1 232.7 133.1 235.2 131.9 M230.1 134.1 227.3 132.9 M227.3 132.9 226.0 130.5 225.8 127.9 226.0 125.3 M227.8 124.6 230.3 125.8 231.7 128.0 233.8 129.6 235.2 131.9 M227.8 124.6 227.0 124.6 M227.0 124.6 226.0 125.3 M234.2 88.9 236.3 92.1 M227.8 92.2 229.9 93.4 232.4 93.8 234.5 95.1 M234.5 95.1 236.3 92.1 M231.4 109.9 232.1 107.4 232.6 104.9 M231.4 109.9 230.0 110.4 M221.7 110.1 222.7 111.0 M228.8 101.5 229.8 101.8 M230.0 110.4 227.5 110.2 225.2 111.4 222.7 111.0 M232.6 104.9 229.8 101.8 M166.1 231.0 166.4 228.1 M166.1 231.0 169.1 231.0 172.1 231.3 M172.1 231.3 170.0 227.2 M146.3 225.9 150.3 224.9 M152.0 229.6 152.6 227.5 M150.0 219.9 147.5 219.7 M150.3 224.9 152.2 221.9 M152.2 221.9 153.4 221.7 M154.9 220.3 153.4 221.7 M154.3 217.2 154.9 220.3 M150.0 219.9 150.3 219.1 M154.3 217.2 152.6 217.0 M152.6 217.0 150.3 219.1 M213.6 175.4 212.2 172.9 213.2 169.9 212.1 167.4 210.4 164.9 211.8 161.9 210.2 159.4 M213.6 175.4 210.7 174.8 208.0 175.6 M208.0 175.6 206.0 173.8 205.9 171.0 204.2 169.1 202.3 167.2 201.9 164.6 201.0 162.2 M210.2 159.4 208.2 160.9 205.5 160.5 203.4 161.9 201.0 162.2 M213.0 156.2 216.9 156.6 M216.9 156.6 218.4 158.2 M215.6 176.1 213.6 175.4 M200.4 184.8 202.0 187.4 M204.1 177.8 208.0 175.6 M198.4 161.5 201.0 162.2 M213.0 156.2 211.0 152.4 M211.0 152.4 208.7 151.5 207.0 149.5 204.6 148.8 202.2 147.9 M202.0 196.2 199.4 197.2 M191.7 194.3 193.9 196.2 196.5 196.9 199.4 197.2 M240.3 215.4 243.8 215.5 M240.3 215.4 240.2 212.7 240.7 210.1 241.4 207.5 M243.8 215.5 246.3 212.1 M246.3 212.1 244.3 209.3 241.7 207.1 M241.7 207.1 241.4 207.5 M246.7 218.9 243.8 215.5 M241.6 221.9 239.9 220.6 M231.8 212.4 231.7 213.8 M231.8 212.4 234.2 211.0 237.0 210.7 238.7 208.2 241.4 207.5 M249.9 211.8 246.3 212.1 M251.9 205.3 250.3 208.4 249.9 211.8 M246.4 203.4 248.9 204.0 251.5 203.8 M251.9 205.3 251.5 203.8 M219.4 211.3 222.5 214.1 M222.5 214.1 225.3 214.4 227.8 215.8 M231.4 214.2 229.1 215.7 M227.8 215.8 229.1 215.7 M208.6 246.7 209.6 249.2 209.8 251.9 M209.3 253.3 209.8 251.9 M209.3 253.3 206.7 252.1 204.6 250.0 201.7 249.5 M208.6 246.7 204.2 245.0 M201.7 249.5 202.3 246.9 204.2 245.0 M209.6 255.3 209.3 255.8 M209.6 255.3 209.3 253.3 M203.4 258.8 202.0 256.8 199.9 255.2 198.6 253.1 197.6 250.8 M201.7 249.5 197.6 250.8 M196.8 250.7 197.6 250.8 M209.6 255.3 212.2 256.1 215.1 255.2 215.1 255.2 M189.5 223.0 192.1 223.0 194.6 223.2 196.8 224.5 M197.1 225.5 196.8 224.5 M187.8 231.6 189.2 232.5 M189.2 232.5 191.5 233.7 194.1 232.4 196.5 233.3 M197.1 225.5 199.6 228.9 M196.5 233.3 198.3 231.3 199.6 228.9 M374.6 107.3 372.2 109.4 M372.2 109.4 369.7 107.0 M374.2 106.3 374.6 107.3 M373.5 105.6 369.6 106.0 M369.7 107.0 369.6 106.0 M372.1 102.5 369.5 105.7 M377.9 105.5 376.8 104.6 M377.6 108.0 377.6 108.1 M377.6 108.1 376.5 108.2 M372.4 110.2 374.3 110.7 M372.2 109.4 372.4 110.2 M376.5 108.2 374.3 110.7 M384.2 118.5 381.3 119.7 M381.4 120.3 381.3 119.7 M298.4 111.5 295.7 114.0 M298.4 111.5 300.5 113.2 303.1 113.6 305.9 113.3 308.2 114.5 M308.2 114.5 305.8 116.8 304.2 119.6 M304.2 119.6 301.9 117.8 299.2 117.1 296.3 116.9 M310.1 109.2 308.0 107.5 305.7 106.1 302.5 106.9 300.4 105.0 M311.7 106.4 311.7 103.5 311.0 100.6 311.6 97.6 M302.6 98.6 302.2 102.0 300.3 104.8 M302.6 98.6 305.2 97.6 307.7 96.6 310.4 96.8 M310.4 96.8 311.6 97.6 M310.2 113.5 308.2 114.5 M298.4 111.5 300.0 108.4 300.4 105.0 M310.4 113.1 310.1 109.2 M290.3 102.6 293.0 102.6 295.3 104.1 297.7 104.9 300.3 104.8 M289.7 96.5 289.6 99.6 290.3 102.6 M304.4 87.0 301.9 87.2 M310.0 93.8 310.4 96.8 M298.1 85.1 297.8 82.7 298.7 80.2 297.9 77.8 298.2 75.8 M322.7 77.1 327.2 78.4 M322.7 77.1 322.1 76.4 M306.9 84.0 306.0 81.6 308.2 79.2 307.1 76.7 306.8 75.2 M241.3 91.3 242.4 89.1 242.8 87.8 M293.9 123.1 295.3 120.1 296.3 116.9 M304.2 119.6 304.8 122.2 305.5 124.7 305.0 127.3 M221.0 110.2 217.6 112.7 M217.6 112.7 215.0 113.4 212.3 113.0 M212.7 106.6 210.0 109.6 M212.3 113.0 210.0 109.6 M201.8 101.2 203.0 102.8 203.8 105.3 205.0 107.6 207.0 109.4 M207.0 109.4 210.0 109.6 M212.4 141.8 213.9 145.3 M212.4 141.8 214.3 139.6 216.6 138.1 219.4 137.5 M213.9 145.3 216.9 146.2 220.0 144.7 223.1 145.4 M216.9 156.6 217.9 154.1 220.2 152.7 221.3 150.4 224.0 149.3 225.2 147.0 M225.2 147.0 223.1 145.4 M229.2 146.9 225.2 147.0 M229.2 146.9 227.8 144.7 227.8 142.1 228.1 139.4 226.6 137.2 225.6 134.9 M219.5 136.6 222.8 136.6 225.6 134.9 M219.5 136.6 219.4 137.5 M202.2 147.9 203.4 145.4 204.0 142.7 M212.4 141.8 210.1 140.4 M204.0 142.7 206.9 141.1 210.1 140.4 M195.2 134.9 198.0 136.3 200.9 137.1 M204.0 142.7 201.8 140.3 200.9 137.1 M204.1 129.3 201.6 128.9 199.7 127.1 M204.1 129.3 205.9 132.9 M200.9 137.1 202.8 134.3 205.9 132.9 M219.2 136.2 216.3 135.7 213.3 135.3 210.4 134.7 M219.5 136.6 219.2 136.2 M210.1 140.4 210.7 137.6 210.4 134.7 M300.6 142.9 302.5 143.4 M302.5 143.4 301.6 145.8 302.1 148.5 301.3 151.0 M298.1 145.2 298.1 144.8 M298.1 144.8 300.6 142.9 M298.1 145.2 298.6 148.4 298.8 151.7 M327.8 200.3 329.4 202.6 M331.0 203.7 329.4 202.6 M337.9 201.4 338.9 200.0 M332.6 193.5 337.0 192.5 M327.8 200.3 328.7 197.6 330.1 195.2 332.6 193.5 M337.0 192.5 336.5 195.3 339.3 197.2 338.9 200.0 M332.6 193.5 330.8 190.8 330.9 187.5 330.2 184.5 M336.5 186.3 333.5 185.0 330.3 184.4 M338.2 191.5 337.0 192.5 M292.9 217.0 295.7 218.2 297.8 220.2 300.0 222.0 M292.9 217.0 294.9 215.6 297.8 216.2 299.9 214.9 302.1 214.0 303.9 212.1 M303.9 212.1 305.5 214.2 M301.2 221.9 300.0 222.0 M292.5 206.1 295.0 206.3 297.3 207.7 299.9 206.7 302.3 207.4 M302.3 207.4 303.5 209.6 303.9 212.1 M292.0 207.3 292.5 206.1 M281.5 192.5 278.9 194.3 277.2 197.0 M277.4 198.6 277.2 197.0 M287.4 200.8 284.8 201.0 282.4 199.7 280.1 198.3 277.4 198.6 M281.5 192.5 284.2 193.7 285.4 196.4 287.2 198.6 M274.9 203.5 275.3 205.0 M274.9 203.5 275.8 200.9 277.4 198.6 M287.4 200.8 285.7 203.0 282.9 203.9 281.4 206.4 278.9 207.5 M278.9 207.5 275.3 205.0 M292.5 206.1 290.3 202.4 M278.9 207.5 279.1 208.5 M292.0 207.3 289.5 209.3 286.8 210.9 M290.3 202.4 287.5 200.8 M286.8 210.9 284.2 210.9 282.2 208.4 279.4 208.8 M253.3 263.9 252.4 263.0 M252.4 263.0 250.2 261.6 248.8 262.6 M248.3 257.6 249.7 257.8 252.6 256.7 M252.6 256.7 253.3 257.6 M154.3 217.2 156.0 213.8 M156.0 213.8 158.2 215.1 159.8 217.0 M157.7 220.2 159.8 217.0 M178.0 250.2 180.0 248.9 182.7 249.1 M183.1 237.1 182.8 236.2 M183.1 237.1 182.3 239.6 180.6 241.8 180.7 244.5 M176.8 244.4 177.9 244.2 180.7 244.5 M188.8 243.0 186.0 241.9 185.3 238.7 183.1 237.1 M188.8 243.0 185.3 243.9 182.3 245.9 M180.7 244.5 182.3 245.9 M171.0 234.1 170.9 233.8 172.4 231.6 M172.4 231.6 176.3 231.0 M176.0 237.8 176.4 237.5 178.5 235.7 180.0 233.2 M180.0 233.2 176.3 231.0 M166.1 231.0 165.3 231.8 M172.1 231.3 172.4 231.6 M182.3 245.9 182.7 249.1 M182.7 233.9 182.8 236.2 M182.7 233.9 180.0 233.2 M365.5 261.3 364.8 263.7 365.8 266.3 364.2 268.7 364.3 270.8 M355.6 260.3 355.3 262.7 355.1 265.2 354.9 267.7 353.5 269.9 M345.4 256.2 342.5 258.3 340.9 261.5 M345.4 256.2 348.2 256.0 350.2 258.5 352.6 259.7 355.4 259.8 M353.5 269.9 350.9 269.5 348.3 269.0 345.6 270.3 343.0 269.6 M340.9 261.5 341.7 264.2 343.3 266.7 343.0 269.6 M351.5 331.1 354.9 331.2 358.2 331.3 M351.3 331.4 351.3 334.3 352.6 337.0 M363.0 337.5 361.0 335.8 359.5 333.6 358.2 331.3 M363.0 337.5 360.3 338.5 357.2 337.1 354.5 338.4 M354.5 338.4 352.6 337.0 M362.2 326.2 361.7 327.6 359.1 328.9 358.2 331.3 M352.1 327.6 351.8 328.5 351.5 331.1 M354.9 342.8 355.1 340.8 354.5 338.4 M351.3 331.4 348.1 331.8 M342.0 325.4 341.7 326.6 M348.1 331.8 345.3 330.9 344.5 327.5 341.7 326.6 M247.8 151.3 245.1 151.1 242.5 150.4 239.8 149.9 237.1 149.6 234.2 151.2 231.6 149.8 M236.6 141.4 233.9 142.8 M236.6 141.4 239.8 142.0 242.8 140.1 246.0 140.9 M246.0 140.9 247.4 141.8 M233.9 142.8 231.5 144.5 230.1 147.1 M230.1 147.1 231.5 149.7 M249.0 153.8 247.8 151.3 M235.9 158.1 233.4 155.9 233.5 152.3 231.6 149.8 M236.3 132.0 235.2 131.9 M230.1 134.1 232.1 136.7 233.5 139.5 233.9 142.8 M236.3 132.0 235.6 135.1 237.4 138.2 236.6 141.4 M239.2 129.8 236.3 132.0 M244.5 133.2 241.6 131.9 239.2 129.8 M244.5 133.2 245.1 135.8 245.8 138.3 246.0 140.9 M229.2 146.9 230.1 147.1 M252.3 130.0 253.5 132.6 253.1 135.7 255.1 137.9 M252.3 130.0 252.6 129.4 M259.7 130.3 259.1 133.1 260.3 135.8 M255.1 137.9 257.6 136.6 260.3 135.8 M244.5 133.2 246.9 130.6 M246.9 130.6 249.5 129.6 252.3 130.0 M247.4 141.8 250.9 141.1 254.0 139.2 M249.0 153.8 251.0 151.9 253.8 151.5 255.8 149.5 259.0 150.1 261.1 148.3 M254.0 139.2 255.9 141.4 257.3 143.9 258.8 146.5 261.1 148.3 M249.6 165.2 252.0 164.1 254.2 162.6 256.9 162.4 M256.9 162.4 258.0 160.1 258.5 157.5 259.4 155.1 260.9 152.9 263.5 151.4 264.1 148.8 M261.1 148.3 264.1 148.8 M258.5 109.1 257.8 112.1 258.5 115.1 M265.6 107.5 266.5 110.2 268.1 112.5 M268.1 112.5 266.3 114.5 265.4 116.9 M265.4 116.9 262.5 118.8 M262.5 118.8 260.6 116.8 258.5 115.1 M251.9 114.0 250.7 111.4 M257.5 108.4 258.5 109.1 M251.9 114.0 255.1 115.3 258.5 115.1 M269.6 129.3 266.9 127.1 264.0 125.0 M272.5 122.4 269.9 120.9 267.9 118.5 265.4 116.9 M249.7 120.9 250.2 118.5 251.4 116.4 251.9 114.0 M227.0 121.3 226.3 117.0 M227.0 121.3 229.4 119.1 231.1 116.5 M226.3 117.0 228.0 115.8 M228.0 115.8 231.0 115.8 M230.0 110.4 229.3 113.2 228.0 115.8 M222.7 111.0 223.4 114.0 M231.8 114.4 231.0 115.8 M231.4 109.9 232.2 111.0 M212.3 113.0 212.9 116.0 210.6 118.6 211.4 121.6 M211.4 121.6 213.7 120.7 215.9 119.5 217.8 117.8 M223.4 114.0 221.7 116.0 220.3 118.2 M217.8 117.8 220.3 118.2 M227.0 124.6 227.0 121.3 M226.0 125.3 224.1 125.2 M220.3 118.2 221.8 120.5 222.6 123.1 224.1 125.2 M248.9 110.6 247.5 108.5 M248.9 110.6 246.1 111.4 244.2 113.7 M240.0 111.3 242.3 112.2 244.2 113.7 M240.0 111.3 240.6 108.4 240.5 105.5 M247.5 108.5 245.5 106.7 243.1 105.8 240.5 105.5 M232.6 104.9 235.1 105.7 237.5 104.6 239.9 104.4 M234.5 95.3 236.4 97.8 239.1 99.1 241.4 101.1 M241.4 101.1 239.9 104.4 M122.4 227.6 122.1 225.4 M122.4 227.6 125.2 227.7 127.7 229.2 M122.1 225.4 125.8 224.1 M125.8 224.1 127.5 226.5 M127.5 226.5 127.7 229.2 M129.3 233.4 127.7 229.2 M121.5 228.5 122.4 227.6 M132.3 223.0 129.9 224.7 127.5 226.5 M122.1 225.4 121.7 225.2 M120.7 222.7 121.7 225.2 M165.6 222.9 168.2 222.1 M162.8 221.0 162.3 217.0 M167.4 219.2 164.9 218.2 162.6 217.0 M167.4 219.2 168.2 221.8 M170.4 224.2 168.2 222.1 M170.0 227.2 170.4 224.2 M166.4 228.1 163.5 226.4 M163.5 226.4 165.6 222.9 M159.7 222.6 162.8 221.0 M163.0 226.6 161.0 224.9 159.7 222.6 M163.0 226.6 163.5 226.4 M157.7 220.2 159.4 222.6 M159.8 217.0 162.0 216.8 M168.8 213.9 167.3 216.3 167.4 219.2 M168.8 213.9 165.7 215.5 162.6 217.0 M171.2 224.0 170.4 224.2 M174.1 220.6 171.2 224.0 M174.1 220.6 172.0 218.2 M172.0 218.2 169.9 219.7 168.2 221.8 M171.8 203.4 169.4 204.1 M171.8 203.4 170.6 200.9 171.8 198.2 170.3 195.8 171.0 193.1 M169.4 204.1 167.2 202.1 167.5 198.9 166.9 198.2 M167.8 191.5 169.7 191.8 M179.4 181.9 177.0 183.5 174.7 185.1 172.7 187.0 172.5 190.7 169.7 191.8 M176.6 228.3 174.7 224.9 M176.6 228.3 178.1 225.9 180.4 224.1 M180.4 224.1 176.4 223.2 M171.2 224.0 174.7 224.9 M185.2 232.0 182.7 233.9 M182.6 225.0 180.8 223.9 M180.8 223.9 180.4 224.1 M180.8 223.9 180.6 220.9 M180.6 220.9 176.4 219.8 M175.7 220.4 176.4 223.2 M175.7 220.4 174.1 220.6 M158.0 224.4 158.6 227.3 160.2 229.9 M158.0 224.4 155.5 224.8 M155.5 224.8 155.0 226.9 M155.0 226.9 156.7 229.4 159.2 230.9 M159.2 230.9 160.0 230.2 M159.4 222.6 158.0 224.4 M163.0 226.6 160.2 229.9 M153.4 221.7 155.5 224.8 M152.6 227.5 155.0 226.9 M158.0 233.5 159.2 230.9 M165.3 231.8 162.5 231.7 160.0 230.2 M151.9 216.4 150.1 216.6 M151.9 216.4 151.3 214.9 M150.1 216.6 150.0 216.5 M150.3 219.1 150.1 216.6 M181.8 182.6 182.6 185.3 183.3 188.0 184.0 190.8 184.3 193.6 183.5 196.5 M191.7 194.3 188.6 196.9 M188.6 196.9 186.0 197.4 183.5 196.5 M177.3 196.7 180.2 196.5 183.2 196.8 M177.3 196.7 174.6 196.5 173.1 194.3 171.0 193.1 M183.5 196.5 183.2 196.8 M204.9 203.6 202.4 203.6 200.0 203.6 197.7 204.7 M197.7 204.7 196.9 203.2 M188.6 196.9 190.4 199.1 190.7 202.0 M196.9 203.2 193.8 202.7 190.7 202.0 M229.1 215.7 230.7 218.5 229.2 221.7 230.4 224.5 M236.4 221.9 235.9 223.0 M235.9 223.0 233.3 224.9 M193.3 248.6 191.9 245.9 190.4 243.4 M193.3 248.6 194.1 248.7 M190.4 243.4 191.8 240.2 M191.8 240.2 195.0 239.6 197.6 237.5 M197.6 237.5 200.6 239.6 M190.9 250.3 193.3 248.6 M188.8 243.0 190.4 243.4 M196.8 250.7 194.1 248.7 M189.2 232.5 191.0 234.7 191.1 237.6 191.8 240.2 M209.8 251.9 212.3 250.0 214.8 248.2 M214.8 248.2 213.1 245.7 211.4 243.2 M204.7 221.4 204.3 222.2 M204.7 221.4 204.1 218.7 202.6 216.4 M204.3 222.2 201.6 222.3 198.9 222.2 M201.4 216.4 202.6 216.4 M200.4 229.0 201.6 228.5 M197.1 223.7 196.8 224.5 M197.1 223.7 198.9 222.2 M199.6 228.9 200.4 229.0 M204.8 224.7 204.3 222.2 M206.0 214.3 202.6 216.4 M211.9 215.2 212.1 216.8 M212.1 216.8 209.1 218.3 206.8 220.8 M200.6 239.6 202.3 239.6 M204.2 245.0 203.8 240.7 M203.8 240.7 202.3 239.6 M211.4 243.2 211.5 239.6 M203.8 240.7 206.2 239.3 208.8 238.8 211.5 239.6 M200.4 229.0 201.5 232.3 203.9 234.8 M202.3 239.6 202.6 237.1 203.9 234.8 M328.9 83.0 325.3 84.8 M328.9 83.0 328.4 80.6 327.2 78.4 M322.7 77.1 321.1 81.5 M325.3 84.8 323.1 83.2 321.1 81.5 M310.9 75.3 311.8 76.9 312.9 79.4 314.3 81.8 316.4 83.8 M321.1 81.5 318.6 82.3 316.4 83.8 M314.7 85.5 316.0 84.8 M316.4 83.8 316.0 84.8 M372.4 110.2 371.7 111.4 M369.7 107.0 367.9 109.9 365.7 112.3 M371.7 111.4 369.6 112.5 367.3 113.4 M373.9 123.0 376.9 123.0 M373.8 118.8 373.9 123.0 M373.8 118.8 374.5 118.5 M378.1 122.0 378.6 119.2 M374.5 118.5 378.6 119.2 M381.3 119.7 381.3 116.7 M381.3 116.7 379.0 117.6 M379.0 117.6 378.8 119.0 M378.1 122.0 378.8 122.0 M374.3 110.7 375.4 111.9 M376.4 111.5 375.4 111.9 M372.3 128.5 371.1 129.6 M371.1 129.6 372.7 131.5 373.5 132.8 M375.5 129.7 375.8 129.9 M367.9 123.8 368.7 123.1 M368.7 123.1 373.5 123.4 M373.5 124.8 372.3 128.5 M370.3 129.9 371.1 129.6 M367.9 123.8 369.9 126.5 370.3 129.9 M373.5 124.8 375.9 126.9 M376.1 127.9 375.9 126.9 M376.1 127.9 375.5 129.7 M381.0 123.8 380.7 124.9 M376.9 123.0 378.4 124.7 M380.7 124.9 378.4 124.7 M380.7 124.9 380.9 125.1 M375.9 126.9 378.4 126.8 M378.6 127.1 378.4 126.8 M373.9 123.0 373.5 123.4 M378.4 124.7 378.4 126.8 M362.1 106.6 359.7 104.8 359.4 101.3 356.6 99.8 M352.9 107.3 354.4 105.0 356.0 102.7 356.6 99.8 M362.1 106.6 361.7 110.2 M361.7 110.2 358.9 109.5 356.3 108.0 353.2 108.4 M310.4 113.1 312.8 111.9 315.4 111.6 318.2 113.5 320.6 112.1 M311.7 106.4 314.2 107.3 316.8 106.0 319.4 106.6 M319.4 106.6 320.1 109.4 320.6 112.1 M361.4 96.0 359.4 98.3 356.6 99.5 M356.6 99.5 354.5 97.9 351.8 97.7 349.9 96.0 M358.0 90.2 355.0 90.1 M355.0 90.1 353.1 91.9 351.0 93.5 349.9 96.0 M358.3 86.3 355.8 85.8 355.7 85.7 M355.0 90.1 354.8 87.3 352.4 85.5 M352.9 107.3 350.6 106.2 348.1 105.8 M348.1 105.8 348.6 103.5 349.5 101.2 348.6 98.6 349.2 96.3 M349.9 96.0 349.4 96.0 M278.3 79.8 280.5 80.9 282.3 83.3 284.3 85.4 M284.3 85.4 282.4 87.2 281.2 89.8 279.0 91.4 M276.4 89.8 279.0 91.4 M287.8 84.9 284.3 85.4 M288.5 95.8 286.0 95.6 283.5 94.8 281.0 95.2 M268.1 112.5 271.2 112.4 M271.2 112.4 273.4 113.5 275.5 114.8 277.2 116.7 278.9 118.6 281.4 119.2 M282.8 122.2 285.6 121.5 288.4 122.1 291.2 122.4 293.9 123.1 M295.7 114.0 293.6 112.3 291.2 111.4 289.0 110.0 286.2 110.1 M281.4 119.2 283.5 117.4 284.7 115.2 284.4 112.0 286.2 110.1 M290.3 102.6 289.4 105.3 286.7 107.0 286.2 110.0 M280.9 95.3 280.8 98.1 281.1 100.8 281.4 103.6 280.9 106.4 M271.2 112.4 273.2 110.5 273.9 107.5 276.5 106.1 M280.9 106.4 276.5 106.1 M227.8 124.6 230.3 123.7 232.7 122.5 235.3 122.2 M235.3 122.2 238.9 124.1 M297.9 143.5 298.1 144.8 M297.9 143.5 296.3 142.7 M298.1 145.2 295.1 143.5 M282.5 124.4 283.0 127.4 283.9 130.2 285.8 132.6 M294.0 123.2 293.7 125.7 294.1 128.2 293.3 130.6 M293.3 130.6 291.1 132.4 288.4 132.5 285.8 132.6 M284.5 143.5 286.1 146.8 M291.8 148.0 288.8 148.1 286.1 146.8 M284.5 143.5 285.0 140.6 286.4 138.1 M292.2 144.1 290.3 141.8 289.1 139.1 M286.4 138.1 289.1 139.1 M297.9 143.5 298.5 142.0 M298.5 142.0 299.3 141.7 M296.3 142.7 296.5 140.9 M298.5 142.0 296.5 140.9 M300.5 139.6 299.6 140.0 M302.5 143.4 303.1 142.7 M299.3 141.7 299.6 140.0 M328.6 213.6 330.4 210.6 332.3 207.7 M328.6 213.6 330.6 216.1 330.9 219.2 M332.3 207.7 334.8 210.0 M334.8 210.0 335.3 213.2 336.9 215.9 M308.7 141.3 307.4 143.6 307.5 146.3 306.8 148.8 M307.8 140.3 308.7 141.3 M301.3 151.0 302.8 151.1 M306.8 148.8 302.8 151.1 M282.5 151.1 283.7 148.5 286.1 146.8 M284.8 157.3 288.7 157.8 M282.8 154.4 284.8 157.3 M291.8 148.0 293.2 150.5 294.7 152.8 M294.7 152.8 292.8 154.6 290.6 156.0 288.7 157.8 M295.1 143.5 292.3 144.0 M298.8 151.7 296.8 152.9 M294.7 152.8 296.8 152.9 M323.3 146.1 320.3 144.8 317.4 143.4 315.3 140.8 M323.3 146.1 322.3 148.5 M322.3 148.5 321.2 149.0 M314.4 148.3 313.5 145.3 312.8 142.3 M312.8 142.3 315.3 140.8 M317.2 136.9 318.0 136.6 M318.0 136.6 320.7 136.3 322.8 138.3 325.3 138.4 M325.7 143.5 326.0 140.9 325.3 138.4 M317.2 136.9 315.3 140.8 M308.7 141.3 312.8 142.3 M312.6 150.1 314.4 148.3 M306.2 130.9 306.8 130.0 M306.3 134.3 306.2 130.9 M317.2 136.9 315.1 134.7 311.7 134.3 309.9 131.7 307.6 129.8 M341.3 198.4 342.7 194.9 M338.9 200.0 341.3 198.4 M338.2 191.5 339.7 191.6 M339.7 191.6 342.7 194.9 M320.1 179.0 322.4 180.1 324.8 181.0 327.2 182.1 M320.1 179.0 322.4 177.1 323.4 174.2 325.2 171.8 327.4 169.9 M327.4 169.9 327.3 172.3 326.8 174.8 326.6 177.2 327.8 179.7 327.2 182.1 M281.5 192.5 281.2 190.8 M281.2 190.8 277.7 190.6 274.2 190.6 M274.6 195.4 275.1 193.0 274.2 190.6 M274.9 203.5 272.4 202.4 270.0 201.0 268.5 198.6 M268.5 198.6 269.5 197.3 M274.6 195.4 272.1 196.5 269.5 197.3 M249.5 165.8 250.8 168.4 251.4 171.5 253.7 173.7 M241.0 189.4 241.4 189.4 M253.2 176.6 250.6 177.6 249.0 179.5 248.9 182.8 246.8 184.2 244.6 185.6 242.7 187.2 241.4 189.4 M251.5 203.8 253.4 201.4 M241.4 189.4 244.3 191.3 247.7 191.8 M253.4 201.4 256.6 200.0 M256.6 200.0 257.1 199.2 M257.1 199.2 256.7 196.2 256.9 193.1 255.5 190.4 M247.7 191.8 250.5 192.2 252.7 189.8 255.5 190.4 M269.5 197.3 270.4 194.5 270.4 191.6 270.5 188.6 M274.2 190.6 271.6 188.4 M270.5 188.6 271.6 188.4 M290.3 202.4 292.6 200.7 294.2 198.2 296.6 196.5 M302.6 206.9 302.3 207.4 M302.6 206.9 303.0 202.5 M296.6 196.5 298.9 198.3 300.2 201.2 303.0 202.5 M245.1 232.7 248.1 234.1 251.3 235.0 M245.1 232.7 247.4 234.8 247.8 237.9 249.2 240.4 M251.3 235.0 250.1 237.7 249.2 240.4 M293.0 242.0 289.8 243.4 287.8 246.2 M287.8 246.2 288.2 243.6 287.5 241.1 M285.2 246.8 287.6 246.7 M287.6 246.7 290.3 249.3 M290.3 249.3 288.5 252.6 M288.5 252.6 283.9 252.9 M267.3 231.5 271.0 232.4 M270.5 235.1 271.0 232.4 M268.4 236.1 269.8 235.8 M270.5 235.1 269.8 235.8 M268.4 236.1 265.5 233.6 M267.3 231.5 265.5 233.4 M258.9 233.1 254.6 231.2 M258.9 233.1 260.0 232.8 M260.4 227.1 261.1 227.7 M261.1 227.7 261.4 230.0 M260.0 232.8 261.4 230.0 M268.1 198.6 267.1 201.0 265.0 202.7 264.3 205.1 M275.3 205.0 272.1 206.8 M272.1 206.8 269.5 206.2 266.9 205.8 264.3 205.1 M268.1 198.6 265.4 197.5 263.5 195.3 M257.1 199.2 258.6 196.9 261.8 197.2 263.5 195.3 M263.7 205.5 264.3 205.1 M271.3 232.2 271.3 229.7 271.0 227.1 M271.0 227.1 274.4 227.2 M274.6 231.6 275.6 230.1 M273.0 232.2 274.6 231.6 M273.0 232.2 271.3 232.2 M274.4 227.2 275.6 230.1 M259.2 257.1 256.2 257.0 253.3 257.6 M259.2 257.1 259.4 260.6 260.8 263.9 M253.3 263.9 257.4 265.0 M260.8 263.9 257.4 265.0 M250.3 273.6 251.9 274.1 255.4 274.8 M257.4 265.0 256.2 267.3 256.3 269.9 256.8 272.5 255.4 274.8 M251.5 290.6 252.7 290.0 254.6 288.3 257.1 288.1 259.3 287.0 261.3 285.7 263.6 284.8 M263.6 284.8 263.4 283.5 M261.7 280.6 260.4 277.8 257.9 276.3 255.4 274.8 M263.4 283.5 263.9 280.7 266.2 278.9 268.4 277.1 267.9 273.6 271.2 272.4 272.0 269.8 273.0 267.2 M273.0 267.2 269.9 265.8 M261.7 280.6 262.1 278.0 261.6 275.3 262.3 272.7 261.7 270.0 263.0 267.4 263.1 264.8 M269.9 265.8 266.4 265.8 263.1 264.8 M260.8 263.9 262.8 264.5 M259.6 256.3 259.2 257.1 M262.8 264.5 264.2 262.2 264.7 259.4 266.3 257.1 M267.0 256.5 268.5 256.3 M267.0 256.5 265.1 254.6 263.1 252.8 261.7 250.5 M268.5 256.3 270.4 254.9 272.4 253.5 M261.7 250.5 264.7 250.0 267.5 249.1 M272.4 253.5 272.2 252.3 M269.9 265.8 269.5 262.6 268.8 259.5 268.5 256.3 M266.3 257.1 267.0 256.5 M259.6 256.3 259.3 253.3 259.9 250.4 M259.9 250.4 261.7 250.5 M259.9 250.4 258.7 249.1 M260.5 242.7 258.9 245.8 258.7 249.1 M267.6 243.6 267.7 246.3 267.5 249.1 M265.2 285.8 264.2 288.1 265.3 290.7 264.2 293.1 263.7 295.5 263.6 298.0 264.9 300.6 262.8 302.8 263.5 305.4 263.8 307.9 263.1 309.2 M266.0 286.0 267.3 288.2 269.4 289.7 271.2 291.5 272.5 293.7 274.1 295.7 M274.1 295.7 274.2 298.1 275.1 300.6 273.7 303.0 273.7 305.4 274.8 307.9 274.8 308.2 M263.6 284.8 265.2 285.8 M333.9 275.0 336.9 274.5 339.5 273.2 341.8 271.3 M341.8 271.3 343.5 273.6 344.8 276.0 344.7 278.9 M344.7 278.9 344.1 282.1 342.6 284.9 M342.4 285.3 341.1 287.7 M341.1 287.7 338.6 286.1 336.3 284.3 M349.1 281.2 349.0 281.2 347.3 279.0 344.7 278.9 M343.0 269.6 341.8 271.3 M341.3 288.1 341.1 287.7 M346.3 291.4 346.0 291.5 M358.8 249.5 356.2 249.8 353.6 249.9 351.2 249.6 348.7 249.0 346.4 247.7 M348.9 235.6 348.3 238.0 347.9 240.4 347.0 242.8 347.4 245.4 346.4 247.7 M309.8 303.6 311.2 305.9 312.8 308.0 312.8 310.8 315.0 312.7 315.5 315.3 M309.8 303.6 307.6 304.8 306.9 307.6 303.9 307.8 302.5 309.9 300.8 311.6 298.6 312.8 M302.4 318.3 303.6 317.9 306.3 318.6 308.9 317.9 311.5 316.2 314.2 317.1 M298.6 312.8 298.7 315.4 298.6 315.9 M314.2 317.1 315.5 315.3 M314.2 317.1 314.7 319.5 313.6 321.9 313.9 322.5 M348.1 331.8 346.8 334.2 345.4 335.1 M341.7 326.6 339.6 328.0 338.8 329.1 M352.6 337.0 350.6 338.5 349.1 339.0 M342.0 325.4 340.5 320.8 M342.7 319.1 342.5 319.3 340.5 320.8 M209.3 133.4 210.1 134.0 M209.3 133.4 209.2 130.8 210.7 128.4 210.6 125.8 210.7 123.2 M210.1 134.0 212.4 133.0 213.6 130.4 215.6 128.9 218.1 128.2 M210.7 123.2 211.3 122.1 M218.1 128.2 218.4 127.1 M205.9 132.9 209.3 133.4 M204.1 129.3 206.3 127.3 208.8 125.6 210.7 123.2 M219.2 136.2 219.2 133.5 219.5 130.7 218.1 128.2 M224.1 125.2 221.2 125.8 218.4 127.1 M241.3 91.3 243.9 95.0 M241.4 101.1 244.7 98.2 M243.9 95.0 244.7 98.2 M119.0 227.2 120.5 225.7 M119.0 227.2 117.2 227.6 M120.5 225.7 117.5 224.2 M117.2 227.6 114.2 224.6 M121.5 228.5 119.0 227.2 M118.3 233.2 118.4 230.3 117.2 227.6 M120.7 222.7 117.5 224.2 M113.3 224.3 114.2 224.6 M172.0 218.2 172.2 216.4 M162.5 211.7 165.8 211.7 168.8 213.0 M168.9 213.8 168.8 213.0 M183.2 196.8 182.3 199.3 182.5 202.0 M177.3 196.7 177.1 199.9 175.7 202.8 M177.5 204.2 175.7 202.8 M175.7 202.8 173.1 203.8 M188.3 220.9 188.2 217.6 M188.2 217.6 184.9 217.1 M184.9 217.1 181.5 219.2 M167.9 205.8 168.1 207.8 M168.1 207.8 164.9 209.8 161.2 209.7 M161.2 209.7 160.2 209.5 M169.4 204.1 167.9 205.8 M156.0 213.8 154.5 210.9 154.5 210.8 M162.5 211.7 161.2 209.7 M178.1 206.9 177.5 204.2 M181.8 209.1 178.1 206.9 M181.8 209.1 183.8 208.0 M182.5 202.0 183.4 204.4 184.0 206.8 M183.8 208.0 184.0 206.8 M184.0 206.8 187.6 206.0 190.2 203.3 M199.5 209.2 199.6 212.1 198.7 214.8 M199.5 209.2 197.5 207.1 M197.5 207.1 194.6 208.4 191.9 210.0 M198.7 214.8 196.3 215.7 193.7 215.9 M193.7 215.9 190.9 215.0 M190.9 215.0 190.6 212.4 M204.0 209.0 199.5 209.2 M201.4 216.4 198.7 214.8 M197.7 204.7 197.5 207.1 M190.2 203.3 190.6 206.8 191.9 210.0 M197.1 223.7 197.1 220.6 194.5 218.6 193.7 215.9 M183.8 208.0 186.6 208.5 187.9 211.6 190.6 212.4 M180.5 212.1 182.9 214.5 184.9 217.1 M181.8 209.1 180.5 212.1 M235.8 230.1 234.3 231.7 M241.2 236.3 238.0 235.6 235.0 234.4 M241.2 236.3 242.0 233.6 243.8 231.4 M235.0 234.4 234.3 231.7 M243.8 231.4 243.7 229.7 M241.9 229.3 243.5 229.5 M230.4 224.5 227.7 226.8 M227.7 226.8 229.4 229.6 232.0 231.8 M233.3 224.9 235.3 227.1 235.8 230.1 M232.0 231.8 234.3 231.7 M235.9 223.0 238.6 224.4 240.8 226.4 241.9 229.3 M251.3 235.0 253.5 233.8 M247.7 229.1 243.7 229.7 M245.1 232.7 243.8 231.4 M243.6 228.3 243.5 229.5 M203.9 234.8 207.1 234.0 210.0 232.4 M201.6 228.5 204.3 228.5 206.2 230.9 208.9 230.6 M208.9 230.6 210.0 232.4 M227.1 226.9 225.0 224.7 224.0 221.9 M227.1 226.9 225.8 228.0 M225.8 228.0 222.9 227.2 220.0 226.7 M220.0 226.7 218.6 222.4 M227.7 226.8 227.1 226.9 M227.8 215.8 225.9 218.8 224.0 221.9 M224.1 235.7 225.9 233.4 226.2 230.8 225.8 228.0 M232.0 231.8 230.4 234.7 227.5 236.3 M222.5 214.1 221.3 216.9 219.1 219.1 218.8 222.2 M222.1 236.7 219.0 234.7 215.4 234.9 M222.1 236.7 222.2 239.5 222.9 242.1 223.0 244.9 223.5 247.6 M219.4 248.0 217.6 245.7 217.1 242.5 215.1 240.2 213.3 237.8 M219.4 248.0 222.8 249.2 M222.8 249.2 223.5 247.6 M215.4 234.9 214.6 235.2 M215.6 233.8 216.9 231.3 217.6 228.5 220.0 226.7 M215.6 233.8 215.4 234.9 M224.1 235.7 222.1 236.7 M214.8 248.2 219.4 248.0 M211.5 239.6 213.3 237.8 M210.0 232.4 212.1 234.2 214.6 235.2 M367.1 104.1 366.1 104.0 M367.1 104.1 369.1 100.6 M366.1 104.0 363.9 101.1 363.6 97.6 M369.1 100.6 367.9 98.1 M367.9 98.1 363.6 97.6 M362.1 106.6 366.1 104.0 M365.7 112.3 362.4 111.9 M369.5 105.7 367.1 104.1 M361.7 110.2 362.4 111.9 M361.4 96.0 363.6 97.6 M369.7 96.8 367.9 98.1 M325.3 84.8 325.0 88.4 M316.0 84.8 318.1 86.4 319.1 88.9 M325.0 88.4 322.1 89.0 319.1 88.9 M312.3 97.6 311.6 97.6 M312.3 97.6 313.6 95.4 315.0 93.4 316.8 91.7 319.0 90.3 M372.9 113.7 371.5 116.8 M375.3 113.2 375.8 114.1 M375.8 114.1 372.7 117.6 M372.7 117.6 371.5 116.8 M369.2 116.6 367.3 113.4 M371.7 111.4 372.9 113.7 M375.4 111.9 375.3 113.2 M367.8 118.9 369.2 116.6 M368.7 123.1 367.8 118.9 M373.8 118.8 372.7 117.6 M379.0 117.6 378.7 117.2 M378.7 117.2 376.7 116.6 M375.8 114.1 376.7 114.5 M376.7 116.6 376.7 114.5 M377.4 111.7 377.9 114.1 M377.4 111.7 378.0 111.4 M378.2 114.2 377.9 114.1 M376.7 114.5 377.9 114.1 M376.4 111.5 377.4 111.7 M381.3 116.7 381.4 116.5 M370.3 129.9 369.6 130.5 M367.0 124.1 367.0 127.0 366.1 129.7 M366.1 129.7 369.6 130.5 M371.0 135.3 371.0 135.2 369.6 133.0 M367.0 124.1 364.6 123.2 362.1 123.8 M362.6 130.7 366.1 129.7 M362.6 130.7 362.1 130.4 M362.1 123.8 361.3 127.1 362.1 130.4 M319.4 106.6 321.3 104.0 M318.8 98.9 320.4 101.3 321.3 104.0 M310.2 113.5 311.7 115.4 313.1 117.4 314.0 119.7 M314.0 119.7 316.5 119.4 318.8 118.7 321.1 117.5 M320.6 112.2 320.8 114.9 321.1 117.5 M328.8 126.8 329.8 123.9 331.4 121.2 M322.0 122.3 322.3 118.6 M322.0 122.3 323.9 124.4 326.6 125.2 328.8 126.8 M322.3 118.6 324.8 117.5 327.5 117.8 330.2 117.8 M348.1 105.8 346.7 106.3 M340.2 102.2 340.5 103.7 M340.5 103.7 341.7 105.1 M346.7 106.3 344.1 106.0 341.7 105.1 M345.2 90.0 343.0 91.7 340.3 92.4 M336.1 91.0 340.3 92.4 M336.1 91.0 336.9 88.2 335.4 85.5 335.4 82.7 M335.4 82.7 335.8 82.4 M349.4 96.0 348.4 93.7 346.9 91.8 345.2 90.0 M340.2 102.2 337.8 100.1 M337.8 100.1 339.1 97.6 340.3 95.2 340.3 92.4 M332.5 83.7 328.9 83.0 M332.5 83.7 335.4 82.7 M257.5 108.4 256.7 105.6 M250.4 111.1 250.7 111.4 M250.4 111.1 252.5 109.1 251.9 105.8 253.9 103.8 M256.7 105.6 253.9 103.8 M247.5 108.5 249.3 105.9 249.7 103.0 250.1 100.0 M250.1 100.0 252.9 101.5 M252.9 101.5 253.9 103.8 M259.7 86.9 260.6 88.0 M267.4 81.8 266.2 83.9 266.6 86.5 M260.6 88.0 263.8 88.0 266.6 86.5 M276.4 89.8 274.1 91.2 271.3 90.8 268.9 91.7 M266.6 86.5 268.0 89.0 268.9 91.7 M280.9 95.3 278.3 95.7 277.2 98.8 274.5 99.2 M276.5 106.1 274.2 102.9 M268.9 91.7 267.6 94.9 M274.5 99.2 272.1 97.9 270.3 95.6 267.6 94.9 M260.6 88.0 260.4 90.8 260.0 93.6 M267.6 94.9 266.5 95.7 M233.7 116.0 234.4 120.3 M233.7 116.0 237.5 113.5 M237.8 115.1 237.3 117.6 235.1 119.4 235.3 122.2 M237.8 115.1 237.6 113.5 M234.4 120.3 235.3 122.2 M231.1 116.5 232.5 118.6 234.4 120.3 M231.8 114.4 233.7 116.0 M232.2 111.0 234.8 112.3 237.5 113.5 M240.0 111.3 237.6 113.5 M240.5 105.5 239.9 104.4 M242.5 122.5 242.7 119.8 241.8 117.2 M242.5 122.5 246.7 122.4 M248.7 121.4 248.0 118.5 246.5 116.0 244.2 114.1 M244.2 114.1 241.8 117.2 M237.8 115.1 241.8 117.2 M238.9 124.1 242.5 122.5 M246.9 130.6 247.3 127.9 247.4 125.1 246.7 122.4 M292.3 144.0 295.3 140.7 M295.3 140.7 296.5 140.7 M295.3 140.7 293.1 137.6 M313.8 122.3 317.2 122.4 320.1 124.1 M313.8 122.3 311.8 124.9 310.5 127.9 M320.1 124.1 320.7 126.7 320.6 129.3 M320.6 129.3 319.7 129.7 M314.0 119.7 313.8 122.3 M322.0 122.3 320.1 124.1 M305.0 127.3 306.8 130.0 M307.6 129.8 310.5 127.9 M318.0 136.6 319.3 133.3 319.7 129.7 M306.2 130.9 303.2 132.7 299.6 132.7 M300.7 139.2 298.7 137.1 M211.2 121.9 209.1 121.3 M209.1 121.3 206.5 120.9 204.0 121.1 201.6 122.5 M200.7 123.2 201.6 122.5 M200.7 123.2 198.7 121.7 196.9 119.9 195.3 119.6 M206.7 109.8 205.3 113.1 206.0 116.7 M206.7 109.8 204.3 111.5 201.3 111.9 199.0 113.7 M206.0 116.7 203.2 116.6 200.7 115.8 M199.0 113.7 200.7 115.8 M207.0 109.4 206.7 109.8 M201.6 122.5 200.4 119.2 200.7 115.8 M353.2 208.3 352.7 208.4 M352.6 209.9 352.7 208.4 M352.6 209.9 353.7 210.2 M328.6 213.6 325.2 214.6 321.6 215.1 M321.6 215.1 323.4 217.3 325.7 219.0 326.2 222.0 327.8 224.3 M330.9 219.2 329.2 221.5 328.4 224.2 M329.0 184.4 330.2 184.5 M330.3 184.4 332.9 182.6 332.9 178.9 335.3 177.0 M327.6 169.5 330.3 170.3 330.9 173.5 334.1 173.8 335.4 176.2 M327.6 169.5 327.4 169.9 M335.3 177.0 335.4 176.2 M331.8 121.3 335.4 120.6 338.9 120.0 M339.5 127.2 341.1 123.6 M338.9 120.0 341.1 123.6 M325.3 138.4 326.4 136.8 M326.4 136.8 327.6 133.7 327.0 130.4 M328.8 126.8 328.6 128.8 M327.0 130.4 328.6 128.8 M339.5 127.2 336.7 128.7 334.5 130.9 M331.4 121.2 331.8 121.3 M328.6 128.8 331.7 129.4 334.5 130.9 M318.5 179.4 317.4 183.1 M318.5 179.4 317.4 178.2 M309.5 182.7 309.0 178.2 M317.4 178.2 314.6 179.2 311.8 178.1 309.0 178.2 M312.6 150.1 312.6 153.5 M302.8 151.1 305.0 152.4 305.5 155.2 307.5 156.7 309.4 158.2 M309.4 158.2 311.0 155.9 312.6 153.5 M321.2 149.0 319.4 152.0 318.5 155.3 M312.6 153.5 315.3 155.2 318.5 155.3 M317.4 183.1 317.8 185.5 M318.5 179.4 320.1 179.0 M329.0 184.4 326.4 185.5 325.3 188.4 322.8 189.6 M317.8 185.5 320.0 187.9 322.8 189.6 M326.1 199.4 327.8 200.3 M326.1 199.4 325.9 196.7 323.1 195.4 322.7 192.9 M322.8 189.6 322.7 192.9 M344.0 213.5 341.7 215.9 338.5 216.9 M336.9 215.9 338.5 216.9 M334.8 210.0 339.6 209.4 M345.7 195.9 346.4 198.8 M345.7 195.9 343.4 194.8 M341.3 198.4 345.7 199.9 M346.4 198.8 346.0 199.7 M345.7 195.9 347.8 195.1 M346.4 198.8 348.5 197.5 M347.8 195.1 348.5 197.5 M348.7 193.7 345.8 191.9 M345.8 191.9 343.4 194.8 M347.8 195.1 348.7 193.8 M339.7 191.6 341.6 189.9 343.5 188.2 M345.8 191.9 345.6 189.9 M345.6 189.9 343.5 188.2 M255.8 190.1 258.3 191.1 260.8 189.6 263.3 190.3 M255.3 181.0 258.3 181.6 260.1 184.3 262.7 185.6 265.3 187.1 M263.3 190.3 265.4 187.6 M265.4 187.6 265.3 187.1 M253.2 176.6 254.4 178.7 255.3 181.0 M255.5 190.4 255.8 190.1 M263.5 195.3 263.6 192.8 263.3 190.3 M267.2 175.3 267.3 178.4 266.4 181.2 266.9 184.3 265.3 187.1 M253.7 173.7 256.4 173.5 259.0 174.7 261.7 174.9 264.4 175.1 267.2 175.3 M282.5 151.1 280.9 149.0 278.9 147.3 M278.9 147.3 279.6 144.7 M285.0 135.9 286.4 138.1 M285.0 135.9 282.8 137.3 280.0 135.6 277.8 136.9 275.4 137.6 M279.6 144.7 279.3 141.7 277.7 139.5 275.4 137.6 M264.9 148.7 266.2 146.0 265.6 142.9 268.3 140.6 268.2 137.6 M264.9 148.7 266.1 149.7 M266.1 149.7 268.7 149.9 271.2 150.8 273.7 149.7 M268.2 137.6 270.9 136.1 M273.7 149.7 274.8 148.5 M274.8 148.5 273.8 146.3 272.9 144.0 272.7 141.6 273.7 138.9 272.2 136.8 M270.9 136.1 272.2 136.8 M260.3 135.8 262.7 137.4 265.8 135.8 268.2 137.6 M264.1 148.8 264.9 148.7 M271.2 133.3 270.9 136.1 M275.6 153.6 273.7 149.7 M282.8 154.4 280.4 153.7 278.1 153.1 275.6 153.6 M278.9 147.3 274.8 148.5 M285.0 135.9 285.8 132.6 M284.0 176.7 281.3 178.4 278.3 179.2 M284.0 176.7 283.8 179.6 285.2 182.0 286.3 184.4 M278.3 179.2 277.7 182.3 278.7 185.2 M278.7 185.2 280.1 187.3 282.3 188.4 M284.3 187.3 282.3 188.4 M272.7 186.6 271.8 183.9 272.6 181.1 273.0 178.4 M273.0 178.4 275.5 179.5 278.3 179.2 M272.7 186.6 271.6 188.4 M281.2 190.8 282.3 188.4 M290.0 192.5 292.9 192.0 294.9 189.9 297.3 188.4 M294.5 185.0 297.3 188.4 M294.5 185.0 291.8 185.1 289.1 184.9 286.3 184.4 M290.0 192.5 288.7 190.1 286.4 188.8 284.3 187.3 M287.2 198.6 287.8 195.2 290.0 192.5 M277.6 164.1 278.3 167.3 M277.6 164.1 275.0 161.9 271.7 160.8 M271.7 160.8 268.9 160.7 M267.4 175.2 269.7 175.5 M267.4 175.2 267.6 172.5 266.3 169.7 266.9 167.0 266.6 164.2 267.8 161.5 M267.8 161.5 268.9 160.7 M289.8 171.8 290.9 169.5 291.0 167.1 291.0 164.6 M289.8 171.8 285.8 173.1 M288.7 157.8 289.4 161.3 291.0 164.6 M285.8 173.1 283.4 170.9 281.4 168.5 278.3 167.3 M275.6 153.6 274.3 156.0 273.3 158.6 271.7 160.8 M285.8 173.1 284.0 176.7 M273.0 178.4 269.7 175.5 M256.9 162.4 259.6 161.6 262.4 162.6 265.1 162.2 267.8 161.5 M302.6 230.2 301.9 233.2 300.4 235.7 299.0 238.3 M302.6 230.2 299.0 229.4 295.5 230.5 M294.7 231.5 296.4 234.5 297.1 237.8 M297.1 237.8 299.0 238.3 M308.3 215.0 308.8 217.7 308.4 220.5 308.9 223.2 310.0 225.8 311.2 228.3 M305.5 214.2 308.3 215.0 M301.2 221.9 302.6 224.2 303.4 226.7 304.8 229.0 M311.2 228.3 308.1 229.2 304.8 229.0 M300.9 240.0 305.6 240.1 M300.9 240.0 299.0 243.8 M299.0 243.8 299.7 246.7 M307.4 245.2 308.3 241.8 M303.7 249.2 299.7 246.7 M308.3 241.8 305.6 240.1 M302.6 230.2 304.3 229.5 M299.0 238.3 300.9 240.0 M293.0 242.0 294.1 243.5 M293.5 240.0 293.0 241.9 M294.1 243.5 296.5 243.7 299.0 243.8 M312.6 240.2 308.3 241.8 M312.6 240.2 313.5 237.7 313.2 235.0 313.7 232.4 314.8 230.0 M304.8 229.0 304.3 229.5 M311.2 228.3 314.7 229.5 M314.8 230.0 314.7 229.5 M309.0 214.9 311.5 216.1 314.6 215.1 317.0 216.8 M309.0 214.9 309.9 211.8 313.6 210.8 314.4 207.6 M316.8 207.2 318.4 209.9 320.6 212.1 M317.0 216.8 320.6 214.6 M320.6 212.1 320.6 214.6 M317.1 227.3 314.7 229.5 M317.1 227.3 317.6 224.7 317.9 222.1 316.3 219.4 317.0 216.8 M310.5 204.4 312.1 206.4 314.4 207.6 M310.5 204.4 308.1 206.0 304.9 204.9 302.6 206.9 M313.1 199.0 316.2 199.9 318.8 202.0 M313.1 199.0 312.3 202.0 310.5 204.4 M318.8 202.0 317.2 204.4 316.8 207.2 M318.8 202.0 321.5 202.0 323.2 199.2 326.1 199.4 M327.8 224.3 325.9 225.8 M321.6 215.1 320.6 214.6 M331.0 203.7 332.3 207.7 M252.6 256.7 253.4 253.4 252.9 250.1 M252.9 250.1 254.1 249.3 M241.0 238.4 243.2 241.4 M243.2 241.4 246.9 242.0 M249.2 240.4 249.2 241.0 M246.9 242.0 249.2 241.0 M290.6 236.9 288.8 237.7 M290.6 236.9 291.2 232.7 M288.8 237.7 284.7 236.1 M291.2 232.7 288.2 231.5 285.4 230.1 M284.7 236.1 285.1 233.3 284.5 230.4 M285.4 230.1 284.5 230.4 M287.6 241.0 288.8 237.7 M293.5 240.0 290.6 236.9 M294.7 231.5 291.2 232.7 M282.4 240.2 285.0 240.3 287.5 241.1 M299.7 246.7 297.2 247.4 295.0 248.9 M295.0 248.9 293.9 248.6 M290.3 249.3 292.6 249.3 M288.5 252.6 289.1 254.0 M293.6 255.2 294.0 252.1 292.6 249.3 M287.6 246.7 287.8 246.2 M292.6 249.3 293.9 248.6 M314.7 253.2 312.1 251.9 310.6 249.6 308.4 247.9 307.4 245.2 M314.7 253.2 312.4 255.1 309.7 256.2 M303.7 249.2 303.6 250.2 M303.6 250.2 306.5 251.4 307.8 254.1 309.7 256.2 M261.1 227.7 264.2 227.4 M267.3 231.5 267.3 229.6 M264.2 227.4 267.3 229.6 M271.0 227.1 270.6 226.9 M267.4 243.3 267.9 240.5 M267.9 240.5 267.4 239.0 M267.4 239.0 262.9 237.5 M262.9 237.5 262.4 240.4 260.4 242.6 M265.5 233.6 262.8 236.8 M262.9 237.5 262.8 236.8 M260.0 232.8 261.5 235.8 M262.8 236.8 261.5 235.8 M257.7 235.0 258.7 236.4 M257.7 235.0 258.9 233.1 M286.8 210.9 286.0 214.9 M279.4 208.8 279.6 211.7 281.5 213.9 282.4 216.5 M282.4 216.5 286.0 214.9 M292.7 217.0 291.6 217.9 M286.0 214.9 289.0 216.1 291.6 217.9 M270.5 235.1 273.1 236.0 M273.0 232.2 273.8 235.0 M273.8 235.0 273.4 235.9 M274.6 231.6 275.7 233.3 M275.7 233.3 275.2 234.6 M274.9 221.6 273.9 219.2 272.3 217.0 M274.9 221.6 278.0 222.7 M280.6 219.9 278.8 222.6 M280.6 219.9 278.5 216.9 275.3 215.0 M275.3 215.0 272.3 217.0 M275.5 213.1 275.3 215.0 M279.1 208.5 277.5 210.9 275.5 213.1 M282.4 216.5 280.9 219.7 M280.9 219.7 280.6 219.9 M274.4 227.2 275.8 224.6 278.0 222.7 M275.6 230.1 278.6 229.7 281.4 230.9 M283.0 230.1 281.8 227.5 281.2 224.5 278.8 222.6 M281.4 230.9 283.0 230.1 M276.7 261.3 276.1 257.7 273.8 254.8 M276.7 261.3 278.5 259.5 281.4 259.7 283.3 257.8 M273.8 254.8 276.5 255.0 278.8 253.1 281.5 253.0 M283.3 257.8 282.9 253.7 M282.9 253.7 281.5 253.0 M272.4 253.5 273.8 254.8 M275.5 266.8 273.0 267.2 M283.9 252.9 282.9 253.7 M281.5 253.0 279.5 250.4 278.9 247.3 M285.2 246.8 282.3 245.3 M278.9 247.3 282.3 245.3 M282.3 245.3 282.9 242.8 282.3 240.3 M280.3 307.9 280.8 307.3 281.3 304.8 281.3 302.2 283.8 300.6 283.3 297.8 285.9 296.2 285.9 293.6 M282.4 308.9 284.8 307.9 287.8 307.6 290.4 306.2 M285.9 293.6 286.3 293.4 M274.1 295.7 277.1 295.5 279.9 294.0 282.9 293.9 285.9 293.6 M293.4 307.0 290.4 306.2 M293.4 307.0 294.4 309.6 296.1 311.5 298.6 312.8 M305.0 279.7 302.1 278.4 299.4 277.0 297.5 274.3 M297.5 285.8 295.2 284.5 294.1 282.3 293.1 280.0 M297.5 274.3 296.1 277.8 293.1 280.0 M319.9 245.0 317.2 243.8 314.7 242.4 312.6 240.2 M315.0 253.2 316.9 251.1 318.8 249.0 M352.8 226.7 352.3 225.1 M352.8 226.7 355.0 225.7 M352.3 225.1 354.2 223.3 354.5 223.2 M348.9 235.6 348.5 235.1 M348.5 234.5 348.5 235.1 M348.5 234.5 349.3 231.5 350.6 228.9 352.8 226.7 M352.9 218.6 353.2 218.1 M353.2 218.1 354.0 218.3 M296.8 298.0 295.9 294.9 293.8 292.4 M296.8 298.0 299.8 298.2 302.8 298.6 305.6 299.7 M302.9 290.3 300.4 288.7 297.5 288.3 M297.5 288.3 295.3 290.0 293.8 292.4 M286.6 292.9 289.0 293.3 291.4 292.7 293.8 292.4 M286.6 292.9 286.3 293.4 M293.4 307.0 294.4 304.0 295.4 300.9 296.8 298.0 M310.0 303.2 307.5 301.9 305.6 299.7 M328.9 266.6 329.3 269.7 330.5 272.4 332.5 274.8 M332.5 274.8 329.9 276.4 326.8 277.1 324.0 278.5 M322.2 267.7 323.7 270.2 324.1 272.8 322.4 275.7 323.7 278.2 M324.0 278.5 323.7 278.2 M340.5 320.8 336.9 319.3 M342.9 310.7 342.7 310.5 339.7 311.1 M339.7 311.1 339.8 314.2 337.0 316.3 336.8 319.2 M330.9 323.0 330.9 323.0 330.7 320.3 331.4 317.9 M331.4 317.9 334.0 318.4 336.5 319.0 M330.5 317.3 326.0 318.6 M323.9 320.2 323.8 319.9 M323.8 319.9 326.0 318.6 M331.4 317.9 330.8 317.5 M328.6 315.8 329.7 316.1 M329.7 316.1 330.5 317.3 M328.6 315.8 326.0 318.6 M320.9 315.2 318.2 316.1 315.5 315.3 M320.9 315.2 322.4 317.5 323.8 319.9 M320.9 315.2 323.0 313.7 324.1 311.3 M249.4 99.3 249.7 96.4 249.7 93.5 251.7 91.0 251.9 88.9 M256.6 93.5 254.7 90.4 253.2 89.1 M250.1 100.0 249.6 99.4 M257.6 99.5 255.0 99.9 252.9 101.5 M258.2 94.1 258.7 96.9 257.6 99.5 M258.2 94.1 256.6 93.5 M243.9 95.0 246.3 93.7 248.1 91.8 249.1 88.9 250.0 88.7 M258.2 94.1 260.0 93.6 M173.5 206.3 175.5 208.2 M173.5 206.3 171.0 207.8 169.6 210.4 M175.5 208.2 174.7 211.0 M174.7 211.0 172.2 210.8 169.7 210.9 M178.1 206.9 175.5 208.2 M173.1 203.8 173.5 206.3 M168.1 207.8 169.6 210.4 M168.8 213.0 169.7 210.9 M175.4 211.8 173.9 216.1 M179.3 212.7 178.1 216.1 M178.1 216.1 176.4 217.2 M176.4 217.2 173.9 216.1 M174.7 211.0 175.4 211.8 M172.2 216.4 173.9 216.1 M180.5 212.1 179.3 212.7 M181.5 219.2 178.1 216.1 M176.4 219.8 176.4 217.2 M234.2 236.9 230.2 238.6 M234.2 236.9 237.4 239.7 M230.2 238.6 231.2 242.9 M231.2 242.9 234.5 244.3 M227.5 236.3 230.2 238.6 M235.0 234.4 234.2 236.9 M241.0 238.4 237.4 239.7 M223.5 247.6 226.1 246.1 228.3 243.9 231.2 242.9 M243.2 241.4 241.1 244.9 M241.1 244.9 237.8 244.1 234.5 244.2 M229.4 253.1 230.3 252.4 231.2 249.8 233.3 248.1 234.6 245.8 M234.6 245.8 234.5 244.3 M213.6 225.4 209.1 226.2 M213.6 225.4 215.6 221.7 M212.8 218.5 210.7 221.1 209.0 224.1 M209.0 224.1 208.6 225.5 M208.6 225.5 209.1 226.2 M208.9 230.6 209.1 226.2 M218.6 222.4 215.6 221.7 M212.1 216.8 212.8 218.5 M206.8 220.8 209.0 224.1 M204.8 224.7 208.6 225.5 M360.0 141.4 360.9 137.2 M360.0 141.4 355.4 140.3 M354.8 135.1 354.3 139.2 M355.4 140.3 354.3 139.2 M363.4 133.3 367.1 135.0 M363.4 133.3 362.3 136.7 M362.3 136.7 364.1 138.4 M367.3 136.7 367.1 135.0 M364.6 138.4 364.1 138.4 M362.6 130.7 363.4 133.3 M369.6 133.0 367.1 135.0 M366.2 139.8 364.6 138.4 M366.2 139.8 367.8 139.5 M368.8 138.0 367.3 136.7 M363.5 140.9 366.2 141.2 M366.2 139.8 366.2 141.2 M367.8 118.9 364.3 120.0 360.7 119.5 M362.4 111.9 361.4 114.8 359.4 117.1 M359.4 117.1 360.7 119.5 M362.1 123.8 361.0 122.5 M360.7 119.5 361.0 122.5 M358.5 131.0 362.1 130.4 M358.5 131.0 357.5 128.1 355.8 125.5 M332.4 99.3 329.9 101.4 M332.4 99.3 332.6 96.1 331.5 93.1 M329.9 101.4 327.3 99.9 324.7 98.4 322.8 95.9 M331.5 93.1 329.6 91.5 M322.9 95.6 325.1 93.6 326.9 91.1 M337.8 100.1 335.0 100.0 332.4 99.3 M336.1 91.0 333.7 92.0 331.5 93.1 M318.8 98.9 320.6 97.1 322.8 95.9 M321.3 104.0 323.6 104.9 326.0 105.3 328.5 104.8 M332.5 83.7 332.1 86.6 331.5 89.3 329.6 91.5 M325.0 88.4 326.9 91.1 M319.0 90.3 321.0 92.9 322.9 95.6 M329.2 107.6 332.3 108.3 335.5 108.2 M328.4 110.5 329.5 113.4 330.5 116.3 M330.5 116.3 332.9 114.9 335.5 114.5 338.0 113.5 M338.0 113.5 337.5 110.5 335.5 108.2 M328.5 104.8 329.2 107.6 M320.6 112.2 323.0 110.6 325.6 110.1 328.4 110.5 M340.5 103.7 337.5 105.4 335.5 108.2 M330.2 117.8 330.5 116.3 M338.9 120.0 339.2 116.8 341.3 114.4 M341.3 114.4 338.0 113.5 M259.9 103.5 258.3 99.9 M259.9 103.5 262.7 104.3 265.6 104.8 M258.3 99.9 260.9 100.5 263.3 99.5 265.7 98.7 M265.7 98.7 265.3 101.5 265.9 104.2 M265.6 104.8 265.9 104.2 M257.6 99.5 258.3 99.9 M256.7 105.6 259.9 103.5 M265.6 107.5 265.6 104.8 M266.5 95.7 265.7 98.7 M274.2 102.9 271.4 103.1 268.6 103.7 265.9 104.2 M296.7 140.0 296.6 140.6 M296.7 140.0 298.2 138.8 M296.6 140.6 299.4 139.9 M298.2 138.8 299.4 139.9 M298.7 137.1 298.1 138.1 M293.1 137.6 296.2 138.2 M293.1 137.6 294.4 135.1 295.5 132.5 M295.5 132.5 297.3 132.7 M297.3 132.7 297.7 135.4 296.6 137.9 M296.2 138.2 296.6 137.9 M296.7 140.0 296.2 138.2 M293.3 130.6 295.5 132.5 M299.6 132.7 297.3 132.7 M298.1 138.1 296.6 137.9 M351.2 210.9 349.9 209.8 M352.7 208.4 350.6 208.0 M349.9 209.8 350.6 208.0 M351.5 203.7 352.6 203.9 M352.5 205.2 352.0 205.5 350.5 207.5 M349.6 204.0 349.7 206.8 M349.7 206.8 350.5 207.5 M350.5 207.5 350.6 208.0 M338.8 246.4 341.4 246.2 343.7 247.7 346.2 247.8 M338.8 246.4 336.8 243.9 336.2 241.0 336.3 237.9 M340.8 234.2 338.1 235.5 336.3 237.9 M353.1 221.5 351.2 223.8 M353.1 221.5 350.6 219.7 M351.2 223.8 348.8 221.3 M350.6 219.7 348.8 221.3 M354.1 221.3 353.1 221.5 M350.6 219.3 352.9 218.6 M328.4 224.2 330.7 225.8 333.4 226.7 M333.4 226.7 335.6 226.7 M338.5 216.9 338.7 217.5 M338.7 217.5 338.9 220.2 336.2 221.8 336.2 224.4 335.6 226.7 M350.6 219.3 350.2 217.9 M349.0 217.0 350.2 217.9 M348.8 221.3 347.0 221.4 M347.0 221.4 346.2 218.2 M349.0 217.0 349.1 215.7 M346.0 212.6 344.6 212.9 M346.0 212.6 346.6 212.9 M344.2 213.2 344.6 212.9 M344.0 213.5 345.5 215.6 346.1 218.1 M346.6 212.9 349.1 215.7 M338.7 217.5 341.3 219.6 M356.1 168.6 354.0 170.5 M357.3 169.0 357.6 169.2 M356.6 171.0 354.0 170.5 M355.2 173.4 352.7 172.6 M352.7 172.6 353.3 170.6 M337.4 175.2 338.0 172.5 339.4 170.2 M340.5 175.7 342.6 173.6 345.3 172.4 M339.4 170.2 343.3 169.2 M343.3 169.2 345.3 172.4 M335.4 176.2 337.4 175.2 M334.8 164.1 332.7 164.5 M327.7 168.9 329.6 166.0 332.7 164.5 M334.8 164.1 336.9 165.7 338.4 167.7 339.4 170.2 M334.8 164.1 335.7 163.5 M335.7 163.5 340.0 162.7 M343.6 168.3 341.1 165.9 340.0 162.7 M343.6 168.3 343.3 169.2 M336.5 186.3 339.7 184.4 M335.3 177.0 337.4 179.2 339.4 181.5 M343.5 188.2 343.3 185.7 M339.7 184.4 343.3 185.7 M343.0 158.4 342.3 160.8 M343.0 158.4 341.0 154.7 M340.0 162.7 342.3 160.8 M335.7 163.5 336.1 160.9 337.1 158.3 336.7 155.5 M325.7 143.5 328.3 143.9 330.7 144.8 M326.4 136.8 329.2 135.9 331.8 137.3 334.5 137.7 M333.5 143.1 334.2 140.4 334.5 137.7 M354.8 135.1 354.7 134.5 M358.5 131.0 356.9 133.0 354.7 134.4 M360.9 137.2 362.3 136.7 M324.2 158.2 325.8 160.5 326.7 163.1 327.3 165.7 327.4 168.5 M327.4 168.5 326.4 165.9 323.7 165.2 322.5 162.9 319.3 162.8 318.2 160.3 M319.2 158.8 318.2 160.3 M327.7 168.9 327.4 168.5 M327.6 169.4 325.1 169.3 322.7 168.8 320.3 170.3 317.9 169.4 M316.2 161.6 318.2 160.3 M316.2 161.6 316.0 165.8 M317.9 169.4 316.0 165.8 M317.4 178.2 316.9 175.2 315.9 172.3 M316.2 161.6 313.1 160.5 310.2 159.2 M318.5 155.3 319.2 158.8 M309.4 158.3 310.2 159.2 M296.8 152.9 298.9 154.8 298.0 158.0 300.2 159.8 301.1 162.3 M309.4 158.3 306.4 159.2 303.9 160.9 301.1 162.3 M316.0 165.8 313.5 166.8 311.2 168.2 308.3 167.6 M310.2 159.2 309.5 162.0 310.1 165.1 308.3 167.6 M291.0 164.6 293.3 163.5 296.0 164.2 298.5 163.8 301.0 163.0 M301.0 163.0 301.1 162.3 M331.9 153.3 328.9 151.9 325.6 152.3 M330.4 158.6 327.4 158.9 324.5 158.0 M325.6 152.3 325.4 155.2 324.5 158.0 M332.7 164.5 330.7 161.8 330.4 158.6 M336.7 155.5 334.4 154.6 332.5 153.0 M332.5 153.0 331.9 153.3 M330.7 144.8 331.6 147.8 333.3 150.4 M322.3 148.5 323.8 150.5 325.6 152.3 M333.3 150.4 332.5 153.0 M343.6 168.3 346.1 166.5 M342.3 160.8 344.9 162.6 M349.6 161.4 352.9 160.9 M349.6 161.4 348.1 157.3 M349.5 155.3 352.1 156.2 354.2 157.9 M354.2 157.9 352.9 160.9 M344.9 162.6 349.3 162.1 M343.0 158.4 345.7 158.5 348.1 157.3 M357.9 167.0 356.1 166.2 M358.9 166.2 357.9 167.0 M358.4 165.3 358.9 166.2 M357.8 165.0 358.4 165.3 M359.0 160.3 359.1 162.8 357.8 165.0 M359.0 160.3 355.6 162.8 M357.5 165.0 355.6 162.8 M342.0 207.2 344.2 209.1 M342.0 207.2 342.3 204.5 M344.2 209.1 346.7 206.9 M342.3 204.5 344.5 204.1 M344.5 204.1 346.0 204.8 M346.0 204.8 346.7 206.9 M339.6 209.4 342.0 207.2 M344.6 212.9 344.2 209.1 M337.9 201.4 340.0 203.0 342.3 204.5 M346.0 212.6 348.2 210.1 M349.7 206.8 346.7 206.9 M348.5 203.6 349.6 204.0 M348.5 203.6 346.0 204.8 M348.2 210.1 349.9 209.8 M346.6 212.9 350.5 212.9 M349.1 215.7 351.0 214.5 M351.0 214.5 350.5 212.9 M347.5 189.4 345.6 189.9 M348.7 193.7 349.7 193.1 M347.5 189.4 349.9 191.0 M349.9 191.0 350.0 191.8 M350.9 193.5 349.7 193.1 M350.9 193.5 352.6 191.8 M350.0 191.8 352.5 191.3 M352.0 199.7 349.9 198.9 M352.0 199.7 350.6 201.2 M349.9 198.9 348.4 200.8 M350.6 201.2 348.5 201.1 M351.5 203.7 350.6 201.2 M349.5 197.7 349.9 198.9 M346.0 199.7 348.4 200.8 M348.5 203.6 348.5 201.1 M350.2 196.3 350.1 197.0 M350.2 196.3 351.5 195.6 M350.1 197.0 353.3 197.8 M349.5 197.7 350.1 197.0 M348.7 193.8 350.2 196.3 M351.6 194.3 350.9 193.5 M351.6 194.3 351.5 195.6 M351.6 194.3 352.9 194.5 M325.9 225.8 325.8 228.8 325.4 231.8 326.5 234.6 M314.8 230.0 316.4 232.0 319.4 232.0 320.6 234.5 322.6 235.9 M326.5 234.6 322.6 235.9 M319.9 245.0 320.7 244.6 M322.6 235.9 320.9 238.6 321.8 241.9 320.7 244.6 M309.2 183.3 309.4 187.1 M309.2 183.3 305.6 183.2 302.2 183.7 M309.4 187.1 306.7 186.9 304.6 188.7 302.1 189.6 299.5 189.8 M299.5 189.8 298.6 189.3 M298.2 188.8 298.6 189.3 M317.8 185.5 315.8 186.9 313.3 187.7 311.9 189.9 M309.5 182.7 309.2 183.3 M311.9 189.9 309.4 187.1 M297.3 188.4 298.2 188.8 M296.6 196.5 297.6 194.2 297.3 191.6 298.6 189.3 M313.7 194.2 312.5 197.9 M311.9 190.4 309.7 192.6 306.3 191.9 304.0 193.9 M312.5 197.9 309.0 196.9 305.5 197.7 M305.5 197.7 304.0 193.9 M322.7 192.9 319.5 192.5 316.7 193.6 313.7 194.2 M311.9 189.9 311.9 190.4 M313.1 199.0 312.5 197.9 M299.5 189.8 301.4 192.2 304.0 193.9 M253.7 238.7 256.1 239.4 258.0 240.9 M253.7 238.7 254.6 235.2 M257.7 238.7 258.1 240.9 M251.6 243.3 249.2 241.0 M251.6 243.3 255.1 242.8 258.0 240.9 M253.5 233.8 254.6 235.2 M257.7 235.0 254.8 235.3 M258.7 236.4 257.7 238.7 M260.4 242.6 258.1 240.9 M254.1 249.3 252.3 246.5 251.6 243.3 M252.6 250.1 249.5 249.1 246.6 247.5 M252.6 250.1 250.2 251.6 248.1 253.5 246.9 253.9 M242.1 250.5 240.8 253.6 M240.8 253.9 240.8 253.6 M246.9 242.0 246.0 244.7 246.6 247.5 M241.1 244.9 240.8 247.8 242.1 250.5 M234.6 245.8 236.0 247.9 237.1 250.2 239.3 251.7 240.8 253.6 M283.3 257.8 283.8 258.1 M289.1 254.0 288.5 256.2 M288.5 256.2 290.6 258.5 M293.6 255.2 294.7 256.6 M294.7 256.6 290.6 258.5 M286.7 265.0 286.4 261.6 M286.4 261.6 290.4 259.2 M294.0 265.2 292.4 262.1 290.4 259.2 M286.4 261.6 283.8 258.1 M290.4 259.2 290.6 258.5 M299.1 254.4 295.9 256.9 M299.6 254.3 301.4 256.8 303.7 258.9 305.6 261.3 M305.6 261.3 302.5 261.1 299.4 260.9 296.4 259.7 M296.4 259.7 295.9 256.9 M295.0 248.9 297.2 251.5 299.1 254.4 M303.6 250.2 301.1 251.7 299.6 254.3 M309.7 256.2 308.2 259.2 307.1 262.4 M307.1 262.4 305.6 261.3 M294.0 265.2 294.9 265.5 M294.9 265.5 295.4 262.6 296.4 259.7 M290.7 220.1 287.9 222.1 M290.7 220.1 292.9 222.6 294.9 225.3 M287.9 222.1 287.6 226.3 M287.6 226.3 291.1 226.2 294.5 226.8 M291.6 217.9 290.7 220.1 M300.0 222.0 297.3 223.3 294.9 225.3 M283.0 230.1 284.5 230.4 M285.4 230.1 287.6 226.3 M295.5 230.5 294.5 226.8 M273.1 236.0 272.6 237.5 M269.8 235.8 270.9 237.7 M272.6 237.5 270.9 237.7 M267.9 240.5 270.9 239.4 M270.9 237.7 270.9 239.4 M275.4 237.4 273.4 235.9 M275.4 237.4 275.0 238.2 M272.6 237.5 273.2 238.5 M275.0 238.2 273.2 238.5 M271.6 239.6 272.6 239.2 M270.9 239.4 271.6 239.6 M280.1 232.9 277.3 233.8 M280.1 232.9 279.3 237.6 M279.3 237.6 276.5 236.8 M281.4 230.9 280.1 232.9 M275.7 233.3 277.3 233.8 M282.3 240.3 280.6 239.6 M280.6 239.6 279.3 237.6 M275.2 234.6 276.5 236.5 M275.4 237.4 276.5 236.8 M272.1 206.8 270.4 210.8 M263.7 205.5 262.8 208.1 262.5 210.9 M270.4 210.8 270.9 211.6 M266.0 286.0 269.3 286.1 272.1 284.5 274.9 283.0 M274.9 283.0 277.2 284.8 280.5 285.0 283.0 286.5 285.0 288.8 M296.9 268.4 294.9 265.5 M297.7 268.9 300.8 269.0 303.1 266.3 306.3 266.7 M307.1 262.4 307.5 265.1 M307.5 265.1 306.3 266.7 M297.7 268.9 298.3 271.6 297.5 274.3 M305.0 279.7 309.1 279.0 M321.3 263.4 321.1 260.8 319.9 258.5 M321.3 263.4 320.2 266.0 M320.2 266.0 315.5 266.8 M317.9 257.6 319.9 258.5 M317.9 257.6 316.6 260.4 315.7 263.4 313.5 265.7 M313.5 265.7 315.5 266.8 M322.2 267.7 320.2 266.0 M317.1 276.5 315.8 274.2 316.2 271.6 315.7 269.2 315.5 266.8 M323.7 278.2 320.6 276.5 317.1 276.5 M307.5 265.1 310.6 264.7 313.5 265.7 M309.2 278.9 311.7 277.6 314.7 278.2 317.1 276.5 M331.7 252.8 328.5 254.1 325.0 254.4 M331.7 252.8 332.7 256.0 334.2 258.9 M334.2 258.9 332.2 260.9 329.8 262.3 M325.0 254.4 323.7 257.2 M329.8 262.3 326.7 261.4 M340.9 261.5 338.9 260.0 336.3 260.0 334.2 258.9 M332.3 249.6 331.7 252.8 M332.3 249.6 334.6 248.9 336.7 247.5 338.8 246.4 M332.5 274.8 333.9 275.0 M328.9 266.6 329.8 262.3 M318.8 249.0 320.8 250.9 323.4 252.0 325.0 254.4 M319.9 258.5 323.7 257.2 M321.3 263.4 323.7 261.6 326.7 261.4 M341.1 123.6 344.0 123.1 346.6 121.9 M348.3 127.0 350.0 124.9 M341.6 128.9 345.1 128.5 348.3 127.0 M346.6 121.9 350.0 124.9 M355.8 125.5 353.4 124.9 350.9 124.7 M350.9 124.7 350.4 124.9 M347.3 134.2 346.7 131.7 348.7 129.5 348.3 127.0 M347.3 134.2 349.8 133.9 352.2 134.9 354.7 134.5 M350.4 124.9 350.0 124.9 M346.9 221.5 342.8 222.8 M347.0 228.6 347.9 226.2 M347.0 228.6 344.3 227.1 342.2 224.8 M342.2 224.8 342.8 222.8 M341.3 219.6 342.8 222.8 M351.2 224.1 347.9 226.2 M348.5 234.5 346.9 231.7 347.0 228.6 M336.8 227.3 339.3 225.5 342.2 224.8 M340.8 234.2 340.2 231.5 338.2 229.5 336.8 227.3 M336.8 227.3 335.6 226.7 M351.1 167.6 350.2 167.3 M351.1 167.6 354.8 166.5 M350.2 167.3 349.8 166.6 M354.8 166.5 354.8 163.0 M354.4 162.8 352.1 164.3 349.9 166.1 M349.8 166.6 349.9 166.1 M356.1 168.6 354.8 166.5 M353.3 170.6 351.1 167.6 M357.3 169.0 357.9 167.0 M356.1 166.2 354.8 166.5 M355.6 162.8 354.8 163.0 M349.3 162.1 349.9 166.1 M352.9 160.9 354.4 162.8 M346.1 166.5 349.8 166.6 M345.3 172.4 345.8 172.7 M350.2 167.3 348.6 171.3 M345.8 172.7 348.6 171.3 M345.3 177.6 348.3 180.5 M345.3 177.6 343.6 178.6 M343.6 178.6 343.4 179.4 M343.4 179.4 344.7 181.5 345.6 183.8 M348.3 180.5 346.6 183.7 M346.6 183.7 345.6 183.8 M340.5 175.7 343.6 178.6 M339.4 181.5 343.4 179.4 M343.3 185.7 345.6 183.8 M348.7 187.7 348.6 184.7 M348.6 184.7 346.6 183.7 M341.0 154.7 341.9 152.2 M333.3 150.4 335.4 149.0 338.0 148.6 M338.0 148.6 340.3 150.0 341.9 152.2 M333.5 143.1 336.3 143.8 339.0 144.4 M338.0 148.6 339.0 144.4 M341.6 128.9 341.9 131.6 342.9 134.1 M347.3 134.2 344.5 136.0 M342.9 134.1 344.5 136.0 M334.5 130.9 335.6 133.7 M342.9 134.1 340.4 134.4 338.1 133.8 335.6 133.7 M335.6 133.7 335.0 137.3 M315.9 172.3 312.5 171.6 309.2 172.4 M309.2 172.4 308.1 167.9 M301.0 163.0 302.0 166.1 M366.2 141.2 366.4 141.8 M363.5 140.9 361.7 143.3 M365.2 144.9 364.0 144.6 361.7 143.3 M352.3 190.3 350.6 190.1 M350.7 188.5 350.6 190.1 M351.1 184.5 348.6 184.7 M348.7 187.7 350.7 188.5 M349.9 191.0 350.6 190.1 M359.3 166.6 358.9 166.2 M329.8 236.6 328.8 239.1 327.1 241.2 325.4 243.2 323.1 244.7 M329.8 236.6 331.3 236.8 M332.1 237.3 331.5 239.8 330.3 242.1 329.4 244.5 330.0 247.2 M330.0 247.2 327.9 245.7 325.1 246.3 323.1 244.7 M320.7 244.6 323.1 244.7 M326.5 234.6 329.8 236.6 M333.4 226.7 333.9 229.4 331.4 231.5 331.1 234.1 331.3 236.8 M336.3 237.9 332.1 237.3 M332.3 249.6 330.0 247.2 M272.3 217.0 270.1 216.9 M270.9 211.6 270.9 214.1 269.8 216.4 M270.1 216.9 269.8 216.4 M262.5 210.9 262.1 211.6 M269.8 216.4 267.8 213.9 265.0 212.6 262.1 211.6 M251.9 205.3 253.4 208.0 255.8 209.7 259.2 210.1 261.0 212.4 M260.7 213.1 261.0 212.4 M261.0 212.4 262.1 211.6 M275.6 247.3 273.6 245.2 271.0 243.7 M275.6 247.3 274.7 244.4 274.3 241.3 M272.3 241.8 274.3 241.3 M272.2 252.3 274.5 250.2 275.6 247.3 M276.0 247.2 275.6 247.3 M267.6 243.6 271.0 243.7 M271.6 239.6 272.3 241.8 M274.5 240.9 275.2 239.0 M274.5 241.0 277.3 241.7 M275.2 239.0 278.6 240.5 M278.6 240.5 277.3 241.7 M275.0 238.2 275.2 239.0 M272.6 239.2 274.5 240.9 M274.3 241.3 274.5 241.0 M276.0 247.2 276.4 244.4 277.3 241.7 M280.6 239.6 278.6 240.5 M289.4 279.4 289.1 275.8 289.3 272.2 M289.4 279.4 288.3 279.9 M289.3 272.2 286.7 269.9 283.6 268.4 M280.0 276.6 280.1 273.1 279.5 269.6 M283.6 268.4 279.5 269.6 M293.1 280.0 289.4 279.4 M296.9 268.4 294.0 268.9 291.9 271.1 289.3 272.2 M297.5 285.8 297.5 288.3 M285.0 288.8 285.1 285.5 288.0 283.1 288.3 279.9 M274.9 283.0 276.2 280.6 278.6 279.0 280.0 276.6 M286.7 265.0 283.6 268.4 M275.5 266.8 277.7 267.9 279.5 269.6 M346.0 291.5 344.8 293.7 342.9 295.3 341.2 297.1 339.9 299.2 337.6 300.5 M341.3 288.1 339.2 289.7 336.9 291.0 334.9 292.7 333.0 294.5 M333.0 294.5 333.9 297.0 336.2 298.4 337.6 300.5 M339.7 311.1 337.7 308.7 335.4 306.6 M337.8 302.8 335.4 306.6 M337.8 302.8 337.6 300.5 M310.0 303.2 312.0 301.5 314.2 300.1 M302.9 290.3 305.6 289.0 308.5 288.3 M308.5 288.3 308.7 291.1 310.8 293.0 311.7 295.5 313.0 297.8 314.2 300.1 M309.1 279.0 309.7 281.8 310.5 284.5 M308.5 288.3 310.5 284.5 M324.1 311.3 324.5 310.5 M324.5 310.5 323.1 308.3 322.2 305.7 320.8 303.5 319.0 301.5 318.1 299.0 M314.2 300.1 318.1 299.0 M330.1 314.7 329.5 312.1 328.9 309.4 M330.1 314.7 332.5 314.7 M328.9 309.4 331.2 308.5 333.3 307.2 M332.5 314.7 333.6 314.0 M333.6 314.0 332.7 310.6 333.5 307.2 M329.7 316.1 330.1 314.7 M324.5 310.5 328.9 309.4 M330.7 317.5 332.5 314.7 M335.4 306.6 333.5 307.2 M346.4 113.7 345.2 115.1 M346.4 113.7 349.2 111.7 352.5 110.7 M352.5 110.7 354.7 113.5 355.6 116.9 M345.7 115.9 348.7 117.0 351.7 117.9 354.9 117.4 M355.6 116.9 354.9 117.4 M346.7 106.3 347.0 108.8 347.1 111.3 346.4 113.7 M341.5 114.3 345.2 115.1 M353.2 108.4 352.5 110.7 M359.4 117.1 355.6 116.9 M346.6 121.9 346.2 118.9 345.7 115.9 M350.9 124.7 352.4 122.4 353.6 119.8 354.9 117.4 M345.3 177.6 345.7 177.1 M345.7 177.1 345.9 173.1 M345.8 146.2 342.3 146.1 339.4 144.2 M345.8 146.2 345.4 143.0 346.6 140.1 M339.4 144.2 340.3 139.6 M346.6 140.1 344.4 136.8 M335.0 137.3 337.9 137.9 340.3 139.6 M339.0 144.4 339.4 144.2 M344.5 136.0 344.4 136.8 M352.1 140.7 349.4 140.4 346.6 140.1 M348.0 146.5 349.9 148.4 352.5 149.1 M348.0 146.5 346.0 146.5 M346.0 146.5 345.0 150.3 M345.0 150.3 346.9 152.7 349.5 154.0 M352.5 149.1 351.7 152.2 M352.1 140.7 351.7 143.7 M341.9 152.2 345.0 150.3 M349.5 155.3 349.5 154.0 M307.5 176.1 307.4 175.4 M307.4 175.4 304.9 173.3 301.7 172.8 298.6 171.9 M302.6 179.9 300.6 178.5 298.7 176.9 296.5 175.9 294.6 174.3 M298.6 171.9 294.6 174.1 M309.0 178.2 307.5 176.1 M309.2 172.4 307.4 175.4 M302.2 183.7 302.6 179.9 M302.0 166.1 299.8 168.7 298.6 171.9 M294.5 185.0 293.4 182.3 294.4 179.7 293.8 177.0 294.6 174.3 M289.8 171.8 291.8 173.7 294.6 174.1 M359.0 160.3 359.4 159.9 M354.2 157.9 354.8 157.7 M359.4 159.9 357.3 158.4 354.8 157.7 M358.4 165.3 359.7 164.4 M359.4 159.9 360.4 159.8 M350.2 217.9 352.0 216.8 M353.2 218.1 352.9 217.1 M352.0 216.8 352.9 217.1 M352.0 216.8 352.0 215.8 M352.9 212.2 352.2 214.0 M352.9 212.2 354.0 212.2 M352.2 214.0 354.0 214.7 M351.3 211.2 352.9 212.2 M351.1 214.5 352.2 214.0 M352.0 215.8 354.0 215.1 M352.9 217.1 354.0 216.4 M269.9 217.2 269.8 220.1 269.4 222.8 M269.4 222.8 268.8 223.5 M263.7 220.8 263.7 219.2 M263.7 220.8 266.3 221.7 268.4 223.5 M268.4 223.5 268.8 223.5 M270.1 216.9 269.9 217.2 M260.7 213.1 262.7 215.9 263.7 219.2 M270.6 226.9 268.8 223.5 M260.1 224.3 261.8 222.4 263.7 220.8 M264.2 227.4 266.4 225.6 268.4 223.5 M324.0 279.8 322.3 281.6 321.6 284.3 320.1 286.2 317.9 287.6 M324.0 279.8 325.8 281.5 325.9 284.2 328.1 285.7 328.7 288.1 M317.9 287.6 319.2 289.9 319.3 292.4 318.5 295.1 320.0 297.3 M328.7 288.1 328.0 290.7 328.3 293.4 M323.7 296.6 320.0 297.3 M324.0 278.5 324.0 279.8 M336.3 284.3 333.9 285.6 331.5 287.2 328.7 288.1 M318.1 299.0 320.0 297.3 M333.0 294.5 330.7 293.7 328.3 293.4 M333.3 307.2 330.9 305.5 329.3 303.0 327.0 301.3 325.2 299.1 323.7 296.6 M360.9 157.6 360.4 156.9 357.9 155.0 M354.8 157.7 355.8 154.7 M357.9 155.0 355.8 154.7 M362.0 153.5 359.4 152.6 M357.9 155.0 359.4 152.6 M351.7 152.2 355.4 153.5 M355.4 153.5 355.8 154.7 M355.4 140.3 355.3 143.0 356.2 145.6 M351.7 143.7 354.6 146.8 M356.2 145.6 354.6 146.8 M352.5 149.1 354.0 148.1 M354.6 146.8 354.0 148.1 M350.1 174.9 351.5 176.0 M350.1 174.9 350.7 172.9 M351.5 176.0 352.5 174.2 M352.4 172.8 352.5 174.2 M345.9 173.1 349.0 175.4 M348.6 171.3 350.7 172.9 M349.0 175.4 350.1 174.9 M353.7 176.3 351.7 176.4 M351.7 176.4 351.5 176.0 M348.4 177.2 348.8 176.8 M348.4 177.2 349.1 179.9 M350.1 179.9 351.5 178.9 M350.1 179.9 349.1 179.9 M351.5 178.9 351.2 177.4 M349.0 175.4 348.8 176.8 M348.3 180.5 349.1 179.9 M351.7 176.4 351.2 177.4 M352.5 178.9 351.5 178.9 M359.4 152.6 359.2 152.2 M359.2 152.2 360.7 150.7 M361.2 150.7 360.7 150.7 M363.3 150.0 362.6 149.9 M361.2 150.7 362.6 149.9 M356.1 152.7 359.2 152.2 M356.1 152.7 356.2 149.9 M359.2 152.2 357.9 149.8 M354.0 148.1 356.2 149.9 M364.1 147.9 363.2 147.4 M363.2 147.4 362.3 148.7 M360.1 148.6 359.1 148.3 M360.2 148.5 362.1 145.8 M359.1 148.3 357.9 145.8 M362.1 145.8 361.7 143.3 M360.7 150.7 360.1 148.6 M362.3 148.7 360.2 148.5 M357.9 149.8 359.1 148.3 M363.2 147.4 362.1 145.8 M356.2 145.6 357.9 145.8 M360.0 141.4 361.5 143.3" fill="none" stroke="#636363" stroke-width="0.6" stroke-linejoin="round" stroke-linecap="round"/>
<path d="M201.9 133.4 206.6 127.2 212.8 122.5 219.0 121.7 216.7 124.0 211.2 128.8 205.8 132.7Z" fill="#fdecd8"/>
<path d="M264.4 120.2 276.9 119.0 280.8 120.2 276.9 125.6 272.2 124.8 269.0 127.2 267.5 124.0Z" fill="#fdecd8"/>
<path d="M269.0 128.8 273.0 126.4 276.9 128.8 281.6 131.1 280.0 133.4 273.8 133.4 270.6 131.1Z" fill="#fdecd8"/>
<path d="M284.7 142.0 290.9 135.8 293.3 141.2 289.4 141.2Z" fill="#fdecd8"/>
<path d="M159.8 208.0 164.5 207.7 164.2 214.0 163.5 221.0 160.6 221.0 161.0 214.0Z" fill="#fdecd8"/>
<path d="M169.2 220.2 172.3 214.7 177.8 213.1 180.0 214.7 178.6 222.5 177.8 230.3 174.7 228.8 173.9 222.5Z" fill="#f9c48f"/>
<path d="M252.5 198.5 255.5 199.3 257.5 197.5 258.9 201.0 257.8 206.5 253.0 206.9 251.9 203.5 253.3 201.5Z" fill="#f9c48f"/>
<path d="M292.5 180.3 303.4 178.0 312.8 179.5 316.0 185.0 311.2 190.5 305.0 195.2 296.4 194.4 295.6 186.6Z" fill="#fdecd8"/>
<path d="M312.0 192.0 320.6 193.6 323.0 196.7 317.5 197.5Z" fill="#fdecd8"/>
<path d="M298.7 240.9 309.0 240.0 310.0 243.7 313.7 252.2 312.8 255.9 308.1 255.0 303.4 248.4Z" fill="#de4a3f"/>
<path d="M310.9 234.4 322.1 233.4 324.0 232.5 326.8 237.2 333.4 238.1 336.2 242.8 330.6 244.7 320.3 242.8 317.5 244.7 310.0 243.7 310.0 238.1Z" fill="#f9c48f"/>
<path d="M310.9 244.7 317.5 244.7 320.3 242.8 330.6 245.2 325.9 248.4 321.2 250.3 320.3 255.9 314.6 255.9 313.7 252.2Z" fill="#fdecd8"/>
<path d="M341.6 197.0 345.0 199.0 349.5 196.7 350.2 201.5 347.5 205.3 345.5 203.2 342.5 204.5 343.2 200.5Z" fill="#bd3a30"/>
<path d="M347.8 203.0 351.0 201.4 353.3 202.5 352.5 205.3 348.5 205.8Z" fill="#f4936b"/>
<path d="M348.0 206.3 352.5 206.0 354.0 211.6 354.0 221.0 349.5 221.0 350.0 213.0Z" fill="#fdecd8"/>
<path d="M344.6 228.7 345.8 222.6 353.3 221.7 355.6 228.8 356.8 233.4 342.7 234.4Z" fill="#f9c48f"/>
<path d="M347.4 248.4 359.6 246.5 361.5 253.1 360.5 261.5 348.3 262.5Z" fill="#fdecd8"/>
<path d="M362.4 253.1 366.6 251.6 369.0 260.6 373.6 267.1 372.7 270.9 361.5 270.0 361.5 261.5Z" fill="#fdecd8"/>
<path d="M317.5 270.9 322.1 266.2 327.8 263.4 329.1 266.2 324.0 270.9 321.2 274.6 318.4 273.7Z" fill="#f9c48f"/>
<path d="M310.0 284.0 311.8 275.6 318.4 271.8 319.0 276.5 314.6 284.9Z" fill="#f4936b"/>
<path d="M308.1 267.1 316.5 266.2 317.5 270.9 312.8 273.7 308.1 271.8Z" fill="#fdecd8"/>
<path d="M303.4 276.5 307.2 270.9 311.8 274.6 309.6 281.2 304.3 281.2Z" fill="#fdecd8"/>
<path d="M303.4 284.9 308.1 279.3 310.0 284.0 314.6 285.9 312.8 289.6 305.3 288.7Z" fill="#fdecd8"/>
<path d="M322.1 274.6 326.8 268.1 335.2 268.1 336.2 271.8 332.4 276.5 330.6 280.2 324.0 281.2Z" fill="#fdecd8"/>
<path d="M315.6 284.9 320.3 279.3 324.0 281.2 331.5 281.2 334.3 285.9 333.4 292.4 322.1 293.4 315.6 289.6Z" fill="#fdecd8"/>
<path d="M325.9 259.6 333.4 261.5 334.3 267.1 329.1 266.6 327.8 263.4Z" fill="#fdecd8"/>
<path d="M298.7 305.5 301.5 299.0 305.3 298.0 306.2 307.4 304.3 316.8 301.5 318.6 298.7 315.8Z" fill="#f4936b"/>
<path d="M293.1 303.7 296.9 299.9 299.7 300.8 298.7 306.5 294.0 306.5Z" fill="#fdecd8"/>
<path d="M315.6 302.7 320.3 301.8 321.2 304.6 325.9 304.6 327.8 312.1 322.1 313.0 317.5 309.3 314.6 307.4Z" fill="#fdecd8"/>
<path d="M333.4 323.3 339.9 321.4 347.4 323.3 352.1 328.0 358.7 327.1 363.4 325.8 363.4 342.2 354.9 343.0 350.2 335.5 341.8 329.9 336.2 327.1Z" fill="#fdecd8"/>
<path d="M298.7 240.9 309.0 240.0 310.0 243.7 313.7 252.2 312.8 255.9 308.1 255.0 303.4 248.4Z" fill="url(#dots)"/>
<path d="M201.9 133.4 206.6 127.2 212.8 122.5 219.0 121.7 216.7 124.0 211.2 128.8 205.8 132.7Z M264.4 120.2 276.9 119.0 280.8 120.2 276.9 125.6 272.2 124.8 269.0 127.2 267.5 124.0Z M269.0 128.8 273.0 126.4 276.9 128.8 281.6 131.1 280.0 133.4 273.8 133.4 270.6 131.1Z M284.7 142.0 290.9 135.8 293.3 141.2 289.4 141.2Z M159.8 208.0 164.5 207.7 164.2 214.0 163.5 221.0 160.6 221.0 161.0 214.0Z M169.2 220.2 172.3 214.7 177.8 213.1 180.0 214.7 178.6 222.5 177.8 230.3 174.7 228.8 173.9 222.5Z M252.5 198.5 255.5 199.3 257.5 197.5 258.9 201.0 257.8 206.5 253.0 206.9 251.9 203.5 253.3 201.5Z M292.5 180.3 303.4 178.0 312.8 179.5 316.0 185.0 311.2 190.5 305.0 195.2 296.4 194.4 295.6 186.6Z M312.0 192.0 320.6 193.6 323.0 196.7 317.5 197.5Z M298.7 240.9 309.0 240.0 310.0 243.7 313.7 252.2 312.8 255.9 308.1 255.0 303.4 248.4Z M310.9 234.4 322.1 233.4 324.0 232.5 326.8 237.2 333.4 238.1 336.2 242.8 330.6 244.7 320.3 242.8 317.5 244.7 310.0 243.7 310.0 238.1Z M310.9 244.7 317.5 244.7 320.3 242.8 330.6 245.2 325.9 248.4 321.2 250.3 320.3 255.9 314.6 255.9 313.7 252.2Z M341.6 197.0 345.0 199.0 349.5 196.7 350.2 201.5 347.5 205.3 345.5 203.2 342.5 204.5 343.2 200.5Z M347.8 203.0 351.0 201.4 353.3 202.5 352.5 205.3 348.5 205.8Z M348.0 206.3 352.5 206.0 354.0 211.6 354.0 221.0 349.5 221.0 350.0 213.0Z M344.6 228.7 345.8 222.6 353.3 221.7 355.6 228.8 356.8 233.4 342.7 234.4Z M347.4 248.4 359.6 246.5 361.5 253.1 360.5 261.5 348.3 262.5Z M362.4 253.1 366.6 251.6 369.0 260.6 373.6 267.1 372.7 270.9 361.5 270.0 361.5 261.5Z M317.5 270.9 322.1 266.2 327.8 263.4 329.1 266.2 324.0 270.9 321.2 274.6 318.4 273.7Z M310.0 284.0 311.8 275.6 318.4 271.8 319.0 276.5 314.6 284.9Z M308.1 267.1 316.5 266.2 317.5 270.9 312.8 273.7 308.1 271.8Z M303.4 276.5 307.2 270.9 311.8 274.6 309.6 281.2 304.3 281.2Z M303.4 284.9 308.1 279.3 310.0 284.0 314.6 285.9 312.8 289.6 305.3 288.7Z M322.1 274.6 326.8 268.1 335.2 268.1 336.2 271.8 332.4 276.5 330.6 280.2 324.0 281.2Z M315.6 284.9 320.3 279.3 324.0 281.2 331.5 281.2 334.3 285.9 333.4 292.4 322.1 293.4 315.6 289.6Z M325.9 259.6 333.4 261.5 334.3 267.1 329.1 266.6 327.8 263.4Z M298.7 305.5 301.5 299.0 305.3 298.0 306.2 307.4 304.3 316.8 301.5 318.6 298.7 315.8Z M293.1 303.7 296.9 299.9 299.7 300.8 298.7 306.5 294.0 306.5Z M315.6 302.7 320.3 301.8 321.2 304.6 325.9 304.6 327.8 312.1 322.1 313.0 317.5 309.3 314.6 307.4Z M333.4 323.3 339.9 321.4 347.4 323.3 352.1 328.0 358.7 327.1 363.4 325.8 363.4 342.2 354.9 343.0 350.2 335.5 341.8 329.9 336.2 327.1Z " fill="none" stroke="#666" stroke-width="0.6" stroke-linejoin="round"/>
<path d="M201.9 88.1 205.0 83.4 209.7 78.0 216.7 75.6 223.8 78.0 227.7 83.4 233.1 86.6 245.6 88.1 258.1 89.7 261.2 84.2 265.2 81.1 270.6 82.7 276.9 80.3 286.2 77.2 290.9 78.8 298.8 75.6 301.1 73.3 308.1 75.6 315.9 74.8 322.2 76.4 326.9 74.8 333.1 80.3 338.0 84.0 341.0 87.3 346.2 85.0 355.6 85.8 359.5 82.7 363.4 84.2 365.0 88.9 368.9 92.8 373.6 95.2 377.5 97.5 379.0 101.4 377.5 106.9 378.3 114.7 382.2 117.0 385.3 119.4 382.2 124.0 376.7 128.8 373.6 132.7 369.7 136.6 366.6 141.2 364.2 147.5 361.9 153.8 360.3 160.0 359.5 166.2 355.6 172.5 352.5 178.8 351.0 185.0 352.5 191.2 353.3 197.5 352.5 205.3 354.0 211.6 354.0 221.0 355.6 228.8 356.4 235.0 358.0 244.4 361.9 250.6 366.6 251.6 368.9 259.4 373.6 267.2 372.8 270.3 360.3 271.0 353.3 273.4 347.8 283.6 343.9 283.6 342.3 285.2 346.2 290.6 347.0 303.0 343.0 309.4 342.3 318.8 347.8 323.4 352.5 328.0 358.8 327.3 363.4 325.8 363.4 342.0 352.5 343.0 347.8 337.5 340.0 329.7 333.9 326.6 330.0 321.9 326.9 318.8 320.6 321.9 314.4 322.6 308.1 321.0 303.4 318.8 299.5 317.2 295.6 311.7 286.2 314.0 284.7 310.0 280.0 307.8 270.6 308.6 261.2 309.4 255.0 311.7 254.2 303.0 255.0 295.3 250.3 289.0 248.8 282.8 250.3 273.4 248.8 265.6 248.8 259.4 247.2 253.9 230.0 253.9 226.9 250.0 217.5 250.8 215.2 254.7 213.6 264.8 205.0 264.8 195.6 264.8 186.2 265.6 180.0 255.5 177.0 247.5 176.2 238.1 173.1 234.2 160.6 233.8 145.0 233.8 129.4 233.4 120.0 233.4 113.8 236.6 110.6 232.7 111.5 227.0 114.5 222.5 120.0 218.6 126.2 217.8 129.4 219.4 132.5 213.9 141.9 211.6 143.4 217.8 149.7 217.0 154.4 210.8 158.3 212.3 161.4 207.7 165.3 205.3 167.7 194.4 168.4 180.3 172.3 174.0 176.2 167.8 180.0 165.5 187.0 160.0 189.4 153.8 191.7 147.5 193.3 141.2 192.5 136.6 194.1 128.8 194.8 121.7 196.4 114.7 200.3 110.0 201.1 106.9 201.9 100.6 202.7 95.9Z" fill="none" stroke="#5c5c5c" stroke-width="0.8" stroke-linejoin="round"/>
<rect x="411.1" y="81.5" width="63.6" height="101.3" fill="#fff"/>
<rect x="425.6" y="94.60" width="4.8" height="4.8" fill="#fdecd8"/>
<text x="434.5" y="100.10" font-size="8.6" fill="#7a7a7a" letter-spacing="0.12">0 - 4</text>
<rect x="425.6" y="111.85" width="4.8" height="4.8" fill="#f9c48f"/>
<text x="434.5" y="117.35" font-size="8.6" fill="#7a7a7a" letter-spacing="0.12">4 - 8</text>
<rect x="425.6" y="129.10" width="4.8" height="4.8" fill="#f4936b"/>
<text x="434.5" y="134.60" font-size="8.6" fill="#7a7a7a" letter-spacing="0.12">8 - 12</text>
<rect x="425.6" y="146.35" width="4.8" height="4.8" fill="#de4a3f"/>
<text x="434.5" y="151.85" font-size="8.6" fill="#7a7a7a" letter-spacing="0.12">12 - 16</text>
<rect x="425.6" y="163.60" width="4.8" height="4.8" fill="#bd3a30"/>
<text x="434.5" y="169.10" font-size="8.6" fill="#7a7a7a" letter-spacing="0.12">16 - 20</text>
<g><circle cx="36.9" cy="332" r="6.5" fill="#fff" stroke="#8a8a8a" stroke-width="0.9"/><circle cx="36.9" cy="332" r="4.4" fill="#9a9a9a"/><path d="M34.2 335.200L35.200 331.200 39.200 330.200 38.200 334.200Z" fill="#fff"/><text x="45.6" y="335.7" font-size="10.4" font-weight="bold" fill="#fff" stroke="#8a8a8a" stroke-width="1.5" paint-order="stroke" letter-spacing="0">mapbox</text></g>
</g>
<line x1="692.60" y1="78.2" x2="692.60" y2="338.2" stroke="#e4ebf5" stroke-width="0.8"/>
<line x1="790.20" y1="78.2" x2="790.20" y2="338.2" stroke="#e4ebf5" stroke-width="0.8"/>
<line x1="887.80" y1="78.2" x2="887.80" y2="338.2" stroke="#e4ebf5" stroke-width="0.8"/>
<line x1="985.40" y1="78.2" x2="985.40" y2="338.2" stroke="#e4ebf5" stroke-width="0.8"/>
<line x1="595.0" y1="78.2" x2="595.0" y2="338.2" stroke="#8a8d94" stroke-width="0.9"/>
<line x1="592.0" y1="78.2" x2="595.0" y2="78.2" stroke="#8a8d94" stroke-width="0.8"/>
<line x1="592.0" y1="98.2" x2="595.0" y2="98.2" stroke="#8a8d94" stroke-width="0.8"/>
<line x1="592.0" y1="118.2" x2="595.0" y2="118.2" stroke="#8a8d94" stroke-width="0.8"/>
<line x1="592.0" y1="138.2" x2="595.0" y2="138.2" stroke="#8a8d94" stroke-width="0.8"/>
<line x1="592.0" y1="158.2" x2="595.0" y2="158.2" stroke="#8a8d94" stroke-width="0.8"/>
<line x1="592.0" y1="178.2" x2="595.0" y2="178.2" stroke="#8a8d94" stroke-width="0.8"/>
<line x1="592.0" y1="198.2" x2="595.0" y2="198.2" stroke="#8a8d94" stroke-width="0.8"/>
<line x1="592.0" y1="218.2" x2="595.0" y2="218.2" stroke="#8a8d94" stroke-width="0.8"/>
<line x1="592.0" y1="238.2" x2="595.0" y2="238.2" stroke="#8a8d94" stroke-width="0.8"/>
<line x1="592.0" y1="258.2" x2="595.0" y2="258.2" stroke="#8a8d94" stroke-width="0.8"/>
<line x1="592.0" y1="278.2" x2="595.0" y2="278.2" stroke="#8a8d94" stroke-width="0.8"/>
<line x1="592.0" y1="298.2" x2="595.0" y2="298.2" stroke="#8a8d94" stroke-width="0.8"/>
<line x1="592.0" y1="318.2" x2="595.0" y2="318.2" stroke="#8a8d94" stroke-width="0.8"/>
<line x1="592.0" y1="338.2" x2="595.0" y2="338.2" stroke="#8a8d94" stroke-width="0.8"/>
<rect x="595.4" y="79.95" width="351.36" height="6.5" fill="#6dd3b3"/>
<text x="949.96" y="85.60" font-size="7.7" fill="#444">36</text>
<rect x="595.4" y="89.95" width="331.84" height="6.5" fill="#6dd3b3"/>
<text x="930.44" y="95.60" font-size="7.7" fill="#444">34</text>
<text x="589.8" y="95.50" font-size="7.7" fill="#84878e" text-anchor="end">Haut Lomami</text>
<rect x="595.4" y="99.95" width="312.32" height="6.5" fill="#6dd3b3"/>
<text x="910.92" y="105.60" font-size="7.7" fill="#444">32</text>
<rect x="595.4" y="109.95" width="253.76" height="6.5" fill="#6dd3b3"/>
<text x="852.36" y="115.60" font-size="7.7" fill="#444">26</text>
<text x="589.8" y="115.50" font-size="7.7" fill="#84878e" text-anchor="end">Haut Katanga</text>
<rect x="595.4" y="119.95" width="146.40" height="6.5" fill="#6dd3b3"/>
<text x="745.00" y="125.60" font-size="7.7" fill="#444">15</text>
<rect x="595.4" y="129.95" width="117.12" height="6.5" fill="#6dd3b3"/>
<text x="715.72" y="135.60" font-size="7.7" fill="#444">12</text>
<text x="589.8" y="135.50" font-size="7.7" fill="#84878e" text-anchor="end">Lualaba</text>
<rect x="595.4" y="139.95" width="58.56" height="6.5" fill="#6dd3b3"/>
<text x="657.16" y="145.60" font-size="7.7" fill="#444">6</text>
<rect x="595.4" y="149.95" width="48.80" height="6.5" fill="#6dd3b3"/>
<text x="647.40" y="155.60" font-size="7.7" fill="#444">5</text>
<text x="589.8" y="155.50" font-size="7.7" fill="#84878e" text-anchor="end">Sankuru</text>
<rect x="595.4" y="159.95" width="48.80" height="6.5" fill="#6dd3b3"/>
<text x="647.40" y="165.60" font-size="7.7" fill="#444">5</text>
<rect x="595.4" y="169.95" width="19.52" height="6.5" fill="#6dd3b3"/>
<text x="618.12" y="175.60" font-size="7.7" fill="#444">2</text>
<text x="589.8" y="175.50" font-size="7.7" fill="#84878e" text-anchor="end">Nord Kivu</text>
<rect x="595.4" y="179.95" width="19.52" height="6.5" fill="#6dd3b3"/>
<text x="618.12" y="185.60" font-size="7.7" fill="#444">2</text>
<rect x="595.4" y="189.95" width="9.76" height="6.5" fill="#6dd3b3"/>
<text x="608.36" y="195.60" font-size="7.7" fill="#444">1</text>
<text x="589.8" y="195.50" font-size="7.7" fill="#84878e" text-anchor="end">Equateur</text>
<text x="598.60" y="205.60" font-size="7.7" fill="#444">0</text>
<text x="598.60" y="215.60" font-size="7.7" fill="#444">0</text>
<text x="589.8" y="215.50" font-size="7.7" fill="#84878e" text-anchor="end">Haut Uele</text>
<text x="598.60" y="225.60" font-size="7.7" fill="#444">0</text>
<text x="598.60" y="235.60" font-size="7.7" fill="#444">0</text>
<text x="589.8" y="235.50" font-size="7.7" fill="#84878e" text-anchor="end">Kasai</text>
<text x="598.60" y="245.60" font-size="7.7" fill="#444">0</text>
<text x="598.60" y="255.60" font-size="7.7" fill="#444">0</text>
<text x="589.8" y="255.50" font-size="7.7" fill="#84878e" text-anchor="end">Kwilu</text>
<text x="598.60" y="265.60" font-size="7.7" fill="#444">0</text>
<text x="598.60" y="275.60" font-size="7.7" fill="#444">0</text>
<text x="589.8" y="275.50" font-size="7.7" fill="#84878e" text-anchor="end">Kongo Central</text>
<text x="598.60" y="285.60" font-size="7.7" fill="#444">0</text>
<text x="598.60" y="295.60" font-size="7.7" fill="#444">0</text>
<text x="589.8" y="295.50" font-size="7.7" fill="#84878e" text-anchor="end">Maindombe</text>
<text x="598.60" y="305.60" font-size="7.7" fill="#444">0</text>
<text x="598.60" y="315.60" font-size="7.7" fill="#444">0</text>
<text x="589.8" y="315.50" font-size="7.7" fill="#84878e" text-anchor="end">Nord Ubangi</text>
<text x="598.60" y="325.60" font-size="7.7" fill="#444">0</text>
<text x="598.60" y="335.60" font-size="7.7" fill="#444">0</text>
<text x="589.8" y="335.50" font-size="7.7" fill="#84878e" text-anchor="end">Bas Uele</text>
<text x="595.00" y="350.2" font-size="7.7" fill="#84878e" text-anchor="middle">0</text>
<text x="692.60" y="350.2" font-size="7.7" fill="#84878e" text-anchor="middle">10</text>
<text x="790.20" y="350.2" font-size="7.7" fill="#84878e" text-anchor="middle">20</text>
<text x="887.80" y="350.2" font-size="7.7" fill="#84878e" text-anchor="middle">30</text>
<text x="985.40" y="350.2" font-size="7.7" fill="#84878e" text-anchor="middle">40</text>
<line x1="63.5" y1="552.40" x2="985.5" y2="552.40" stroke="#e6edf6" stroke-width="0.8"/>
<line x1="63.5" y1="527.20" x2="985.5" y2="527.20" stroke="#e6edf6" stroke-width="0.8"/>
<line x1="63.5" y1="502.00" x2="985.5" y2="502.00" stroke="#e6edf6" stroke-width="0.8"/>
<line x1="63.5" y1="476.80" x2="985.5" y2="476.80" stroke="#e6edf6" stroke-width="0.8"/>
<line x1="63.5" y1="451.60" x2="985.5" y2="451.60" stroke="#e6edf6" stroke-width="0.8"/>
<text x="58" y="580.30" font-size="7.7" fill="#84878e" text-anchor="end">0</text>
<text x="58" y="555.10" font-size="7.7" fill="#84878e" text-anchor="end">10</text>
<text x="58" y="529.90" font-size="7.7" fill="#84878e" text-anchor="end">20</text>
<text x="58" y="504.70" font-size="7.7" fill="#84878e" text-anchor="end">30</text>
<text x="58" y="479.50" font-size="7.7" fill="#84878e" text-anchor="end">40</text>
<text x="58" y="454.30" font-size="7.7" fill="#84878e" text-anchor="end">50</text>
<rect x="76.40" y="517.12" width="132" height="60.48" fill="#6dd3b3"/>
<rect x="76.40" y="491.92" width="132" height="25.20" fill="#fcc550"/>
<rect x="76.40" y="481.84" width="132" height="10.08" fill="#3f7f7f"/>
<rect x="267.30" y="502.00" width="132" height="75.60" fill="#6dd3b3"/>
<rect x="267.30" y="484.36" width="132" height="17.64" fill="#fcc550"/>
<rect x="267.30" y="469.24" width="132" height="15.12" fill="#3f7f7f"/>
<rect x="458.20" y="519.64" width="132" height="57.96" fill="#6dd3b3"/>
<rect x="458.20" y="509.56" width="132" height="10.08" fill="#fcc550"/>
<rect x="458.20" y="502.00" width="132" height="7.56" fill="#3f7f7f"/>
<rect x="649.10" y="512.08" width="132" height="65.52" fill="#6dd3b3"/>
<rect x="649.10" y="507.04" width="132" height="5.04" fill="#fcc550"/>
<rect x="649.10" y="491.92" width="132" height="15.12" fill="#3f7f7f"/>
<rect x="840.00" y="514.60" width="132" height="63.00" fill="#6dd3b3"/>
<rect x="840.00" y="504.52" width="132" height="10.08" fill="#fcc550"/>
<rect x="840.00" y="502.00" width="132" height="2.52" fill="#3f7f7f"/>
<rect x="840.00" y="499.48" width="132" height="2.52" fill="#5ac2de"/>
<line x1="62.3" y1="577.6" x2="985.5" y2="577.6" stroke="#9a9da3" stroke-width="0.9"/>
<line x1="142" y1="577.6" x2="142" y2="580.2" stroke="#9a9da3" stroke-width="0.7"/>
<line x1="251" y1="577.6" x2="251" y2="580.2" stroke="#9a9da3" stroke-width="0.7"/>
<line x1="360" y1="577.6" x2="360" y2="580.2" stroke="#9a9da3" stroke-width="0.7"/>
<line x1="469" y1="577.6" x2="469" y2="580.2" stroke="#9a9da3" stroke-width="0.7"/>
<line x1="578.5" y1="577.6" x2="578.5" y2="580.2" stroke="#9a9da3" stroke-width="0.7"/>
<line x1="687.5" y1="577.6" x2="687.5" y2="580.2" stroke="#9a9da3" stroke-width="0.7"/>
<line x1="796.5" y1="577.6" x2="796.5" y2="580.2" stroke="#9a9da3" stroke-width="0.7"/>
<line x1="879" y1="577.6" x2="879" y2="580.2" stroke="#9a9da3" stroke-width="0.7"/>
<text x="142" y="589.4" font-size="7.7" fill="#84878e" text-anchor="middle">5</text>
<text x="251" y="589.4" font-size="7.7" fill="#84878e" text-anchor="middle">9</text>
<text x="360" y="589.4" font-size="7.7" fill="#84878e" text-anchor="middle">13</text>
<text x="469" y="589.4" font-size="7.7" fill="#84878e" text-anchor="middle">17</text>
<text x="578.5" y="589.4" font-size="7.7" fill="#84878e" text-anchor="middle">21</text>
<text x="687.5" y="589.4" font-size="7.7" fill="#84878e" text-anchor="middle">25</text>
<text x="796.5" y="589.4" font-size="7.7" fill="#84878e" text-anchor="middle">29</text>
<text x="879" y="589.4" font-size="7.7" font-weight="bold" fill="#666" text-anchor="middle">Feb</text>
<rect x="579.8" y="430.8" width="15.8" height="8.9" rx="2.2" fill="#6dd3b3"/>
<text x="599.0" y="438.1" font-size="7.75" fill="#333">> 15 ans</text>
<rect x="635.2" y="430.8" width="15.8" height="8.9" rx="2.2" fill="#fcc550"/>
<text x="654.4000000000001" y="438.1" font-size="7.75" fill="#333">5 à 15 ans</text>
<rect x="697.2" y="430.8" width="15.8" height="8.9" rx="2.2" fill="#3f7f7f"/>
<text x="716.4000000000001" y="438.1" font-size="7.75" fill="#333">12 à 59 mois</text>
<rect x="767.2" y="430.8" width="15.8" height="8.9" rx="2.2" fill="#5ac2de"/>
<text x="786.4000000000001" y="438.1" font-size="7.75" fill="#333">0 à 11 mois</text>
<rect x="832.4" y="430.8" width="15.8" height="8.9" rx="2.2" fill="#e5675b"/>
<text x="851.6" y="438.1" font-size="7.75" fill="#333">3 à 28 jours (TNN)</text>
<rect x="922" y="429.2" width="15.8" height="12.2" rx="6.1" fill="#fff" stroke="#777" stroke-width="0.7"/><text x="929.9" y="438.2" font-size="8" fill="#666" text-anchor="middle">All</text>
<rect x="942.2" y="429.2" width="17.7" height="12.2" rx="6.1" fill="#fff" stroke="#777" stroke-width="0.7"/><text x="951" y="438.2" font-size="8" fill="#666" text-anchor="middle">Inv</text>
<path d="M967.2 432.600H974.800V440.100H967.200ZM965.200 432.600H967.200M967.200 430.700V432.600" fill="none" stroke="#666" stroke-width="0.750"/>
<path d="M984.300 432.500H990.800V440.200H983.400V436.200M985.900 430.800L984.100 432.500L985.900 434.200" fill="none" stroke="#666" stroke-width="0.750"/>
<rect x="64" y="604" width="924" height="23.500" fill="#e9eefc"/>
<rect x="64" y="604" width="924" height="4.400" fill="#dde4f7"/>
<path d="M64 627.500V622 L290 611.500 L524 621 L716 617.500 L906 619.300 L988 619 V627.500Z" fill="#d6e0fb"/>
<rect x="64" y="604" width="924" height="23.500" fill="none" stroke="#d9e2f7" stroke-width="0.600"/>
<rect x="62.500" y="611.800" width="3.500" height="10.800" rx="1.500" fill="#fff" stroke="#b4bfd9" stroke-width="0.700"/>
<rect x="986.300" y="611.800" width="3.500" height="10.800" rx="1.500" fill="#fff" stroke="#b4bfd9" stroke-width="0.700"/>
</svg>
</body></html>
